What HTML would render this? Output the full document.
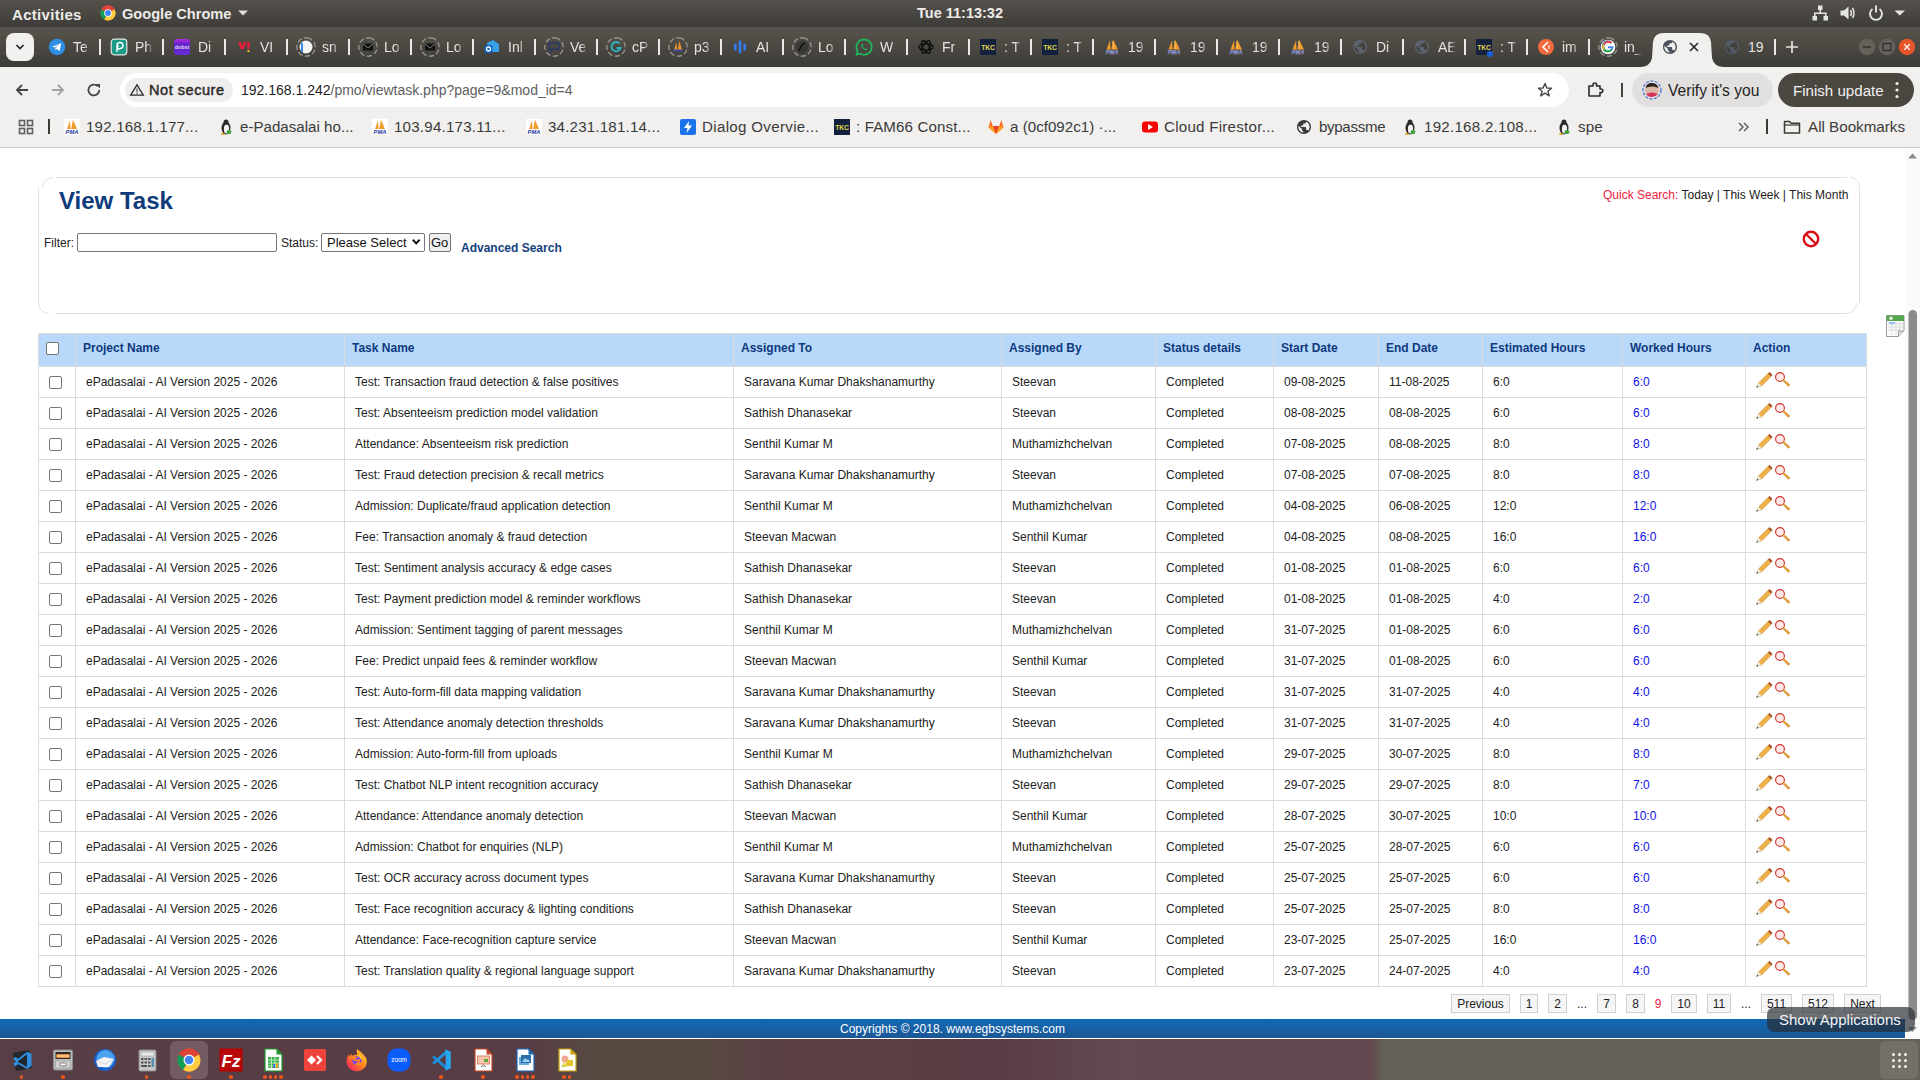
<!DOCTYPE html><html><head><meta charset="utf-8"><style>
*{margin:0;padding:0;box-sizing:border-box}
html,body{width:1920px;height:1080px;overflow:hidden;background:#fff;font-family:"Liberation Sans",sans-serif}
.a{position:absolute}
.t{position:absolute;white-space:nowrap;line-height:14px}
#top{left:0;top:0;width:1920px;height:27px;background:linear-gradient(#55524c,#3e3c38)}
#tabs{left:0;top:27px;width:1920px;height:40px;background:linear-gradient(#58554e,#3d3b36)}
#tool{left:0;top:67px;width:1920px;height:40px;background:#f1f0ee}
#bm{left:0;top:107px;width:1920px;height:41px;background:#f1f0ee;border-bottom:1px solid #c8c6c2}
#page{left:0;top:148px;width:1905px;height:890px;background:#fff}
#sb{left:1905px;top:148px;width:15px;height:890px;background:#fafafa}
#foot{left:0;top:1019px;width:1905px;height:19px;background:linear-gradient(#1169b5,#1c5794)}
#wl{left:0;top:1038px;width:1920px;height:1px;background:#fff}
#dock{left:0;top:1039px;width:1920px;height:41px;background:linear-gradient(90deg,#583e45 0px,#573c43 530px,#574a43 590px,#574a42 700px,#5a3f45 770px,#5a3d44 1000px,#644950 1120px,#634850 1370px,#656058 1384px,#656058 1920px)}
</style></head><body>
<div class="a" id="top"></div>
<div class="a" id="tabs"></div>
<div class="a" id="tool"></div>
<div class="a" style="left:0;top:66px;width:1920px;height:1px;background:#383631"></div>
<div class="a" id="bm"></div>
<div class="a" id="page"></div>
<div class="a" id="sb"></div>
<div class="a" id="foot"></div>
<div class="a" id="wl"></div>
<div class="a" id="dock"></div>
<div class="a" style="left:56px;top:177px;width:1791px;height:1px;background:#e0e0e0"></div>
<div class="a" style="left:56px;top:313px;width:1791px;height:1px;background:#e0e0e0"></div>
<div class="a" style="left:38px;top:188px;width:1px;height:115px;background:#e0e0e0"></div>
<div class="a" style="left:1859px;top:188px;width:1px;height:115px;background:#e0e0e0"></div>
<svg class="a" style="left:30px;top:170px" width="1840" height="150" viewBox="30 170 1840 150"><g fill="none" stroke="#e0e0e0" stroke-width="1"><path d="M42.5 187.5 A11 11 0 0 1 53 177.5"/><path d="M1850.5 177.5 A10.5 10.5 0 0 1 1860 187.5"/><path d="M38.5 303 A10.5 10.5 0 0 0 48.5 313.5"/><path d="M1846.5 313.5 A10.5 10.5 0 0 0 1856.5 303"/></g></svg>
<div class="t" style="left:59px;top:187px;font-size:24px;line-height:27px;font-weight:bold;color:#0e3b7c">View Task</div>
<div class="t" style="left:1603px;top:188px;font-size:12px;color:#222"><span style="color:#f0203c">Quick Search: </span>Today | This Week | This Month</div>
<svg class="a" style="left:1802px;top:230px" width="18" height="18" viewBox="0 0 18 18"><circle cx="9" cy="9" r="7.2" fill="none" stroke="#d80f16" stroke-width="2.4"/><line x1="4" y1="4" x2="14" y2="14" stroke="#d80f16" stroke-width="2.4"/></svg>
<div class="t" style="left:44px;top:236px;font-size:12px;color:#222">Filter:</div>
<div class="a" style="left:77px;top:233px;width:200px;height:19px;border:1px solid #767676;border-radius:2px;background:#fff"></div>
<div class="t" style="left:281px;top:236px;font-size:12px;color:#222">Status:</div>
<div class="a" style="left:321px;top:233px;width:104px;height:19px;border:1px solid #767676;border-radius:2px;background:#fff"></div>
<div class="t" style="left:327px;top:235px;font-size:13px;line-height:15px;color:#111">Please Select</div>
<svg class="a" style="left:411px;top:238px" width="10" height="8" viewBox="0 0 10 8"><path d="M1.8 1.8 L5.2 5.4 L8.6 1.8" fill="none" stroke="#111" stroke-width="2"/></svg>
<div class="a" style="left:429px;top:233px;width:22px;height:19px;border:1px solid #767676;border-radius:2px;background:#efefef"></div>
<div class="t" style="left:431px;top:235px;font-size:13px;line-height:15px;color:#111">Go</div>
<div class="t" style="left:461px;top:241px;font-size:12px;font-weight:bold;color:#123f80">Advanced Search</div>
<svg class="a" style="left:1886px;top:315px" width="19" height="22" viewBox="0 0 19 22"><path d="M0.5 0.5 H18 V16 L12.5 21.5 H0.5 Z" fill="#fbfbfb" stroke="#9a9a9a"/><rect x="0.5" y="0.5" width="17.5" height="5.5" fill="#55a84e"/><circle cx="5" cy="3.3" r="1.8" fill="#e6f2e5"/><g stroke="#d6d6d6" stroke-width="0.8"><line x1="2" y1="9" x2="17" y2="9"/><line x1="2" y1="12" x2="17" y2="12"/><line x1="2" y1="15" x2="15" y2="15"/><line x1="6" y1="7" x2="6" y2="20"/><line x1="10" y1="7" x2="10" y2="20"/><line x1="14" y1="7" x2="14" y2="17"/></g><path d="M3 8 H9" stroke="#7fb3e8" stroke-width="1.5"/><path d="M18 16 H12.5 V21.5" fill="#e0e0e0" stroke="#9a9a9a"/></svg>
<div class="a" style="left:38px;top:333px;width:1828px;height:33px;background:#b8d9f9"></div>
<div class="a" style="left:38px;top:333px;width:1829px;height:1px;background:#dcdcdc"></div>
<div class="a" style="left:38px;top:366px;width:1829px;height:1px;background:#dcdcdc"></div>
<div class="a" style="left:38px;top:397px;width:1829px;height:1px;background:#dcdcdc"></div>
<div class="a" style="left:38px;top:428px;width:1829px;height:1px;background:#dcdcdc"></div>
<div class="a" style="left:38px;top:459px;width:1829px;height:1px;background:#dcdcdc"></div>
<div class="a" style="left:38px;top:490px;width:1829px;height:1px;background:#dcdcdc"></div>
<div class="a" style="left:38px;top:521px;width:1829px;height:1px;background:#dcdcdc"></div>
<div class="a" style="left:38px;top:552px;width:1829px;height:1px;background:#dcdcdc"></div>
<div class="a" style="left:38px;top:583px;width:1829px;height:1px;background:#dcdcdc"></div>
<div class="a" style="left:38px;top:614px;width:1829px;height:1px;background:#dcdcdc"></div>
<div class="a" style="left:38px;top:645px;width:1829px;height:1px;background:#dcdcdc"></div>
<div class="a" style="left:38px;top:676px;width:1829px;height:1px;background:#dcdcdc"></div>
<div class="a" style="left:38px;top:707px;width:1829px;height:1px;background:#dcdcdc"></div>
<div class="a" style="left:38px;top:738px;width:1829px;height:1px;background:#dcdcdc"></div>
<div class="a" style="left:38px;top:769px;width:1829px;height:1px;background:#dcdcdc"></div>
<div class="a" style="left:38px;top:800px;width:1829px;height:1px;background:#dcdcdc"></div>
<div class="a" style="left:38px;top:831px;width:1829px;height:1px;background:#dcdcdc"></div>
<div class="a" style="left:38px;top:862px;width:1829px;height:1px;background:#dcdcdc"></div>
<div class="a" style="left:38px;top:893px;width:1829px;height:1px;background:#dcdcdc"></div>
<div class="a" style="left:38px;top:924px;width:1829px;height:1px;background:#dcdcdc"></div>
<div class="a" style="left:38px;top:955px;width:1829px;height:1px;background:#dcdcdc"></div>
<div class="a" style="left:38px;top:986px;width:1829px;height:1px;background:#dcdcdc"></div>
<div class="a" style="left:38px;top:333px;width:1px;height:654px;background:#dcdcdc"></div>
<div class="a" style="left:75px;top:333px;width:1px;height:654px;background:#dcdcdc"></div>
<div class="a" style="left:344px;top:333px;width:1px;height:654px;background:#dcdcdc"></div>
<div class="a" style="left:733px;top:333px;width:1px;height:654px;background:#dcdcdc"></div>
<div class="a" style="left:1001px;top:333px;width:1px;height:654px;background:#dcdcdc"></div>
<div class="a" style="left:1155px;top:333px;width:1px;height:654px;background:#dcdcdc"></div>
<div class="a" style="left:1273px;top:333px;width:1px;height:654px;background:#dcdcdc"></div>
<div class="a" style="left:1378px;top:333px;width:1px;height:654px;background:#dcdcdc"></div>
<div class="a" style="left:1482px;top:333px;width:1px;height:654px;background:#dcdcdc"></div>
<div class="a" style="left:1622px;top:333px;width:1px;height:654px;background:#dcdcdc"></div>
<div class="a" style="left:1745px;top:333px;width:1px;height:654px;background:#dcdcdc"></div>
<div class="a" style="left:1866px;top:333px;width:1px;height:654px;background:#dcdcdc"></div>
<div class="t" style="left:83px;top:341px;font-size:12px;font-weight:bold;color:#0f3a80">Project Name</div>
<div class="t" style="left:352px;top:341px;font-size:12px;font-weight:bold;color:#0f3a80">Task Name</div>
<div class="t" style="left:741px;top:341px;font-size:12px;font-weight:bold;color:#0f3a80">Assigned To</div>
<div class="t" style="left:1009px;top:341px;font-size:12px;font-weight:bold;color:#0f3a80">Assigned By</div>
<div class="t" style="left:1163px;top:341px;font-size:12px;font-weight:bold;color:#0f3a80">Status details</div>
<div class="t" style="left:1281px;top:341px;font-size:12px;font-weight:bold;color:#0f3a80">Start Date</div>
<div class="t" style="left:1386px;top:341px;font-size:12px;font-weight:bold;color:#0f3a80">End Date</div>
<div class="t" style="left:1490px;top:341px;font-size:12px;font-weight:bold;color:#0f3a80">Estimated Hours</div>
<div class="t" style="left:1630px;top:341px;font-size:12px;font-weight:bold;color:#0f3a80">Worked Hours</div>
<div class="t" style="left:1753px;top:341px;font-size:12px;font-weight:bold;color:#0f3a80">Action</div>
<div class="a" style="left:46px;top:342px;width:13px;height:13px;border:1px solid #767676;border-radius:2px;background:#fff"></div>
<div class="a" style="left:49px;top:376px;width:13px;height:13px;border:1px solid #767676;border-radius:2px;background:#fff"></div>
<div class="t" style="left:86px;top:375px;font-size:12px;color:#222">ePadasalai - AI Version 2025 - 2026</div>
<div class="t" style="left:355px;top:375px;font-size:12px;color:#222">Test: Transaction fraud detection &amp; false positives</div>
<div class="t" style="left:744px;top:375px;font-size:12px;color:#222">Saravana Kumar Dhakshanamurthy</div>
<div class="t" style="left:1012px;top:375px;font-size:12px;color:#222">Steevan</div>
<div class="t" style="left:1166px;top:375px;font-size:12px;color:#222">Completed</div>
<div class="t" style="left:1284px;top:375px;font-size:12px;color:#222">09-08-2025</div>
<div class="t" style="left:1389px;top:375px;font-size:12px;color:#222">11-08-2025</div>
<div class="t" style="left:1493px;top:375px;font-size:12px;color:#222">6:0</div>
<div class="t" style="left:1633px;top:375px;font-size:12px;color:#1010e8">6:0</div>
<svg class="a" style="left:1755px;top:371px" width="36" height="18" viewBox="0 0 36 18"><path d="M2 16 L3.5 12 L13 2.5 L16 5.5 L6.5 15 Z" fill="#f0b048" stroke="#c98a2a" stroke-width="0.6"/><path d="M13 2.5 L14.5 1 L17.5 4 L16 5.5 Z" fill="#a84a1a"/><path d="M2 16 L3.5 12 L6.5 15 Z" fill="#e8ecf4"/><path d="M1 17 L2.2 14.8 L3.2 15.8 Z" fill="#333"/><circle cx="25" cy="6" r="4.4" fill="#fde8e8" stroke="#d0302a" stroke-width="1.1"/><path d="M27.6 9.6 L28.8 8.6 L34.6 13.4 Q35 15.2 33.2 15.2 Z" fill="#e8a038" stroke="#c98222" stroke-width="0.5"/></svg>
<div class="a" style="left:49px;top:407px;width:13px;height:13px;border:1px solid #767676;border-radius:2px;background:#fff"></div>
<div class="t" style="left:86px;top:406px;font-size:12px;color:#222">ePadasalai - AI Version 2025 - 2026</div>
<div class="t" style="left:355px;top:406px;font-size:12px;color:#222">Test: Absenteeism prediction model validation</div>
<div class="t" style="left:744px;top:406px;font-size:12px;color:#222">Sathish Dhanasekar</div>
<div class="t" style="left:1012px;top:406px;font-size:12px;color:#222">Steevan</div>
<div class="t" style="left:1166px;top:406px;font-size:12px;color:#222">Completed</div>
<div class="t" style="left:1284px;top:406px;font-size:12px;color:#222">08-08-2025</div>
<div class="t" style="left:1389px;top:406px;font-size:12px;color:#222">08-08-2025</div>
<div class="t" style="left:1493px;top:406px;font-size:12px;color:#222">6:0</div>
<div class="t" style="left:1633px;top:406px;font-size:12px;color:#1010e8">6:0</div>
<svg class="a" style="left:1755px;top:402px" width="36" height="18" viewBox="0 0 36 18"><path d="M2 16 L3.5 12 L13 2.5 L16 5.5 L6.5 15 Z" fill="#f0b048" stroke="#c98a2a" stroke-width="0.6"/><path d="M13 2.5 L14.5 1 L17.5 4 L16 5.5 Z" fill="#a84a1a"/><path d="M2 16 L3.5 12 L6.5 15 Z" fill="#e8ecf4"/><path d="M1 17 L2.2 14.8 L3.2 15.8 Z" fill="#333"/><circle cx="25" cy="6" r="4.4" fill="#fde8e8" stroke="#d0302a" stroke-width="1.1"/><path d="M27.6 9.6 L28.8 8.6 L34.6 13.4 Q35 15.2 33.2 15.2 Z" fill="#e8a038" stroke="#c98222" stroke-width="0.5"/></svg>
<div class="a" style="left:49px;top:438px;width:13px;height:13px;border:1px solid #767676;border-radius:2px;background:#fff"></div>
<div class="t" style="left:86px;top:437px;font-size:12px;color:#222">ePadasalai - AI Version 2025 - 2026</div>
<div class="t" style="left:355px;top:437px;font-size:12px;color:#222">Attendance: Absenteeism risk prediction</div>
<div class="t" style="left:744px;top:437px;font-size:12px;color:#222">Senthil Kumar M</div>
<div class="t" style="left:1012px;top:437px;font-size:12px;color:#222">Muthamizhchelvan</div>
<div class="t" style="left:1166px;top:437px;font-size:12px;color:#222">Completed</div>
<div class="t" style="left:1284px;top:437px;font-size:12px;color:#222">07-08-2025</div>
<div class="t" style="left:1389px;top:437px;font-size:12px;color:#222">08-08-2025</div>
<div class="t" style="left:1493px;top:437px;font-size:12px;color:#222">8:0</div>
<div class="t" style="left:1633px;top:437px;font-size:12px;color:#1010e8">8:0</div>
<svg class="a" style="left:1755px;top:433px" width="36" height="18" viewBox="0 0 36 18"><path d="M2 16 L3.5 12 L13 2.5 L16 5.5 L6.5 15 Z" fill="#f0b048" stroke="#c98a2a" stroke-width="0.6"/><path d="M13 2.5 L14.5 1 L17.5 4 L16 5.5 Z" fill="#a84a1a"/><path d="M2 16 L3.5 12 L6.5 15 Z" fill="#e8ecf4"/><path d="M1 17 L2.2 14.8 L3.2 15.8 Z" fill="#333"/><circle cx="25" cy="6" r="4.4" fill="#fde8e8" stroke="#d0302a" stroke-width="1.1"/><path d="M27.6 9.6 L28.8 8.6 L34.6 13.4 Q35 15.2 33.2 15.2 Z" fill="#e8a038" stroke="#c98222" stroke-width="0.5"/></svg>
<div class="a" style="left:49px;top:469px;width:13px;height:13px;border:1px solid #767676;border-radius:2px;background:#fff"></div>
<div class="t" style="left:86px;top:468px;font-size:12px;color:#222">ePadasalai - AI Version 2025 - 2026</div>
<div class="t" style="left:355px;top:468px;font-size:12px;color:#222">Test: Fraud detection precision &amp; recall metrics</div>
<div class="t" style="left:744px;top:468px;font-size:12px;color:#222">Saravana Kumar Dhakshanamurthy</div>
<div class="t" style="left:1012px;top:468px;font-size:12px;color:#222">Steevan</div>
<div class="t" style="left:1166px;top:468px;font-size:12px;color:#222">Completed</div>
<div class="t" style="left:1284px;top:468px;font-size:12px;color:#222">07-08-2025</div>
<div class="t" style="left:1389px;top:468px;font-size:12px;color:#222">07-08-2025</div>
<div class="t" style="left:1493px;top:468px;font-size:12px;color:#222">8:0</div>
<div class="t" style="left:1633px;top:468px;font-size:12px;color:#1010e8">8:0</div>
<svg class="a" style="left:1755px;top:464px" width="36" height="18" viewBox="0 0 36 18"><path d="M2 16 L3.5 12 L13 2.5 L16 5.5 L6.5 15 Z" fill="#f0b048" stroke="#c98a2a" stroke-width="0.6"/><path d="M13 2.5 L14.5 1 L17.5 4 L16 5.5 Z" fill="#a84a1a"/><path d="M2 16 L3.5 12 L6.5 15 Z" fill="#e8ecf4"/><path d="M1 17 L2.2 14.8 L3.2 15.8 Z" fill="#333"/><circle cx="25" cy="6" r="4.4" fill="#fde8e8" stroke="#d0302a" stroke-width="1.1"/><path d="M27.6 9.6 L28.8 8.6 L34.6 13.4 Q35 15.2 33.2 15.2 Z" fill="#e8a038" stroke="#c98222" stroke-width="0.5"/></svg>
<div class="a" style="left:49px;top:500px;width:13px;height:13px;border:1px solid #767676;border-radius:2px;background:#fff"></div>
<div class="t" style="left:86px;top:499px;font-size:12px;color:#222">ePadasalai - AI Version 2025 - 2026</div>
<div class="t" style="left:355px;top:499px;font-size:12px;color:#222">Admission: Duplicate/fraud application detection</div>
<div class="t" style="left:744px;top:499px;font-size:12px;color:#222">Senthil Kumar M</div>
<div class="t" style="left:1012px;top:499px;font-size:12px;color:#222">Muthamizhchelvan</div>
<div class="t" style="left:1166px;top:499px;font-size:12px;color:#222">Completed</div>
<div class="t" style="left:1284px;top:499px;font-size:12px;color:#222">04-08-2025</div>
<div class="t" style="left:1389px;top:499px;font-size:12px;color:#222">06-08-2025</div>
<div class="t" style="left:1493px;top:499px;font-size:12px;color:#222">12:0</div>
<div class="t" style="left:1633px;top:499px;font-size:12px;color:#1010e8">12:0</div>
<svg class="a" style="left:1755px;top:495px" width="36" height="18" viewBox="0 0 36 18"><path d="M2 16 L3.5 12 L13 2.5 L16 5.5 L6.5 15 Z" fill="#f0b048" stroke="#c98a2a" stroke-width="0.6"/><path d="M13 2.5 L14.5 1 L17.5 4 L16 5.5 Z" fill="#a84a1a"/><path d="M2 16 L3.5 12 L6.5 15 Z" fill="#e8ecf4"/><path d="M1 17 L2.2 14.8 L3.2 15.8 Z" fill="#333"/><circle cx="25" cy="6" r="4.4" fill="#fde8e8" stroke="#d0302a" stroke-width="1.1"/><path d="M27.6 9.6 L28.8 8.6 L34.6 13.4 Q35 15.2 33.2 15.2 Z" fill="#e8a038" stroke="#c98222" stroke-width="0.5"/></svg>
<div class="a" style="left:49px;top:531px;width:13px;height:13px;border:1px solid #767676;border-radius:2px;background:#fff"></div>
<div class="t" style="left:86px;top:530px;font-size:12px;color:#222">ePadasalai - AI Version 2025 - 2026</div>
<div class="t" style="left:355px;top:530px;font-size:12px;color:#222">Fee: Transaction anomaly &amp; fraud detection</div>
<div class="t" style="left:744px;top:530px;font-size:12px;color:#222">Steevan Macwan</div>
<div class="t" style="left:1012px;top:530px;font-size:12px;color:#222">Senthil Kumar</div>
<div class="t" style="left:1166px;top:530px;font-size:12px;color:#222">Completed</div>
<div class="t" style="left:1284px;top:530px;font-size:12px;color:#222">04-08-2025</div>
<div class="t" style="left:1389px;top:530px;font-size:12px;color:#222">08-08-2025</div>
<div class="t" style="left:1493px;top:530px;font-size:12px;color:#222">16:0</div>
<div class="t" style="left:1633px;top:530px;font-size:12px;color:#1010e8">16:0</div>
<svg class="a" style="left:1755px;top:526px" width="36" height="18" viewBox="0 0 36 18"><path d="M2 16 L3.5 12 L13 2.5 L16 5.5 L6.5 15 Z" fill="#f0b048" stroke="#c98a2a" stroke-width="0.6"/><path d="M13 2.5 L14.5 1 L17.5 4 L16 5.5 Z" fill="#a84a1a"/><path d="M2 16 L3.5 12 L6.5 15 Z" fill="#e8ecf4"/><path d="M1 17 L2.2 14.8 L3.2 15.8 Z" fill="#333"/><circle cx="25" cy="6" r="4.4" fill="#fde8e8" stroke="#d0302a" stroke-width="1.1"/><path d="M27.6 9.6 L28.8 8.6 L34.6 13.4 Q35 15.2 33.2 15.2 Z" fill="#e8a038" stroke="#c98222" stroke-width="0.5"/></svg>
<div class="a" style="left:49px;top:562px;width:13px;height:13px;border:1px solid #767676;border-radius:2px;background:#fff"></div>
<div class="t" style="left:86px;top:561px;font-size:12px;color:#222">ePadasalai - AI Version 2025 - 2026</div>
<div class="t" style="left:355px;top:561px;font-size:12px;color:#222">Test: Sentiment analysis accuracy &amp; edge cases</div>
<div class="t" style="left:744px;top:561px;font-size:12px;color:#222">Sathish Dhanasekar</div>
<div class="t" style="left:1012px;top:561px;font-size:12px;color:#222">Steevan</div>
<div class="t" style="left:1166px;top:561px;font-size:12px;color:#222">Completed</div>
<div class="t" style="left:1284px;top:561px;font-size:12px;color:#222">01-08-2025</div>
<div class="t" style="left:1389px;top:561px;font-size:12px;color:#222">01-08-2025</div>
<div class="t" style="left:1493px;top:561px;font-size:12px;color:#222">6:0</div>
<div class="t" style="left:1633px;top:561px;font-size:12px;color:#1010e8">6:0</div>
<svg class="a" style="left:1755px;top:557px" width="36" height="18" viewBox="0 0 36 18"><path d="M2 16 L3.5 12 L13 2.5 L16 5.5 L6.5 15 Z" fill="#f0b048" stroke="#c98a2a" stroke-width="0.6"/><path d="M13 2.5 L14.5 1 L17.5 4 L16 5.5 Z" fill="#a84a1a"/><path d="M2 16 L3.5 12 L6.5 15 Z" fill="#e8ecf4"/><path d="M1 17 L2.2 14.8 L3.2 15.8 Z" fill="#333"/><circle cx="25" cy="6" r="4.4" fill="#fde8e8" stroke="#d0302a" stroke-width="1.1"/><path d="M27.6 9.6 L28.8 8.6 L34.6 13.4 Q35 15.2 33.2 15.2 Z" fill="#e8a038" stroke="#c98222" stroke-width="0.5"/></svg>
<div class="a" style="left:49px;top:593px;width:13px;height:13px;border:1px solid #767676;border-radius:2px;background:#fff"></div>
<div class="t" style="left:86px;top:592px;font-size:12px;color:#222">ePadasalai - AI Version 2025 - 2026</div>
<div class="t" style="left:355px;top:592px;font-size:12px;color:#222">Test: Payment prediction model &amp; reminder workflows</div>
<div class="t" style="left:744px;top:592px;font-size:12px;color:#222">Sathish Dhanasekar</div>
<div class="t" style="left:1012px;top:592px;font-size:12px;color:#222">Steevan</div>
<div class="t" style="left:1166px;top:592px;font-size:12px;color:#222">Completed</div>
<div class="t" style="left:1284px;top:592px;font-size:12px;color:#222">01-08-2025</div>
<div class="t" style="left:1389px;top:592px;font-size:12px;color:#222">01-08-2025</div>
<div class="t" style="left:1493px;top:592px;font-size:12px;color:#222">4:0</div>
<div class="t" style="left:1633px;top:592px;font-size:12px;color:#1010e8">2:0</div>
<svg class="a" style="left:1755px;top:588px" width="36" height="18" viewBox="0 0 36 18"><path d="M2 16 L3.5 12 L13 2.5 L16 5.5 L6.5 15 Z" fill="#f0b048" stroke="#c98a2a" stroke-width="0.6"/><path d="M13 2.5 L14.5 1 L17.5 4 L16 5.5 Z" fill="#a84a1a"/><path d="M2 16 L3.5 12 L6.5 15 Z" fill="#e8ecf4"/><path d="M1 17 L2.2 14.8 L3.2 15.8 Z" fill="#333"/><circle cx="25" cy="6" r="4.4" fill="#fde8e8" stroke="#d0302a" stroke-width="1.1"/><path d="M27.6 9.6 L28.8 8.6 L34.6 13.4 Q35 15.2 33.2 15.2 Z" fill="#e8a038" stroke="#c98222" stroke-width="0.5"/></svg>
<div class="a" style="left:49px;top:624px;width:13px;height:13px;border:1px solid #767676;border-radius:2px;background:#fff"></div>
<div class="t" style="left:86px;top:623px;font-size:12px;color:#222">ePadasalai - AI Version 2025 - 2026</div>
<div class="t" style="left:355px;top:623px;font-size:12px;color:#222">Admission: Sentiment tagging of parent messages</div>
<div class="t" style="left:744px;top:623px;font-size:12px;color:#222">Senthil Kumar M</div>
<div class="t" style="left:1012px;top:623px;font-size:12px;color:#222">Muthamizhchelvan</div>
<div class="t" style="left:1166px;top:623px;font-size:12px;color:#222">Completed</div>
<div class="t" style="left:1284px;top:623px;font-size:12px;color:#222">31-07-2025</div>
<div class="t" style="left:1389px;top:623px;font-size:12px;color:#222">01-08-2025</div>
<div class="t" style="left:1493px;top:623px;font-size:12px;color:#222">6:0</div>
<div class="t" style="left:1633px;top:623px;font-size:12px;color:#1010e8">6:0</div>
<svg class="a" style="left:1755px;top:619px" width="36" height="18" viewBox="0 0 36 18"><path d="M2 16 L3.5 12 L13 2.5 L16 5.5 L6.5 15 Z" fill="#f0b048" stroke="#c98a2a" stroke-width="0.6"/><path d="M13 2.5 L14.5 1 L17.5 4 L16 5.5 Z" fill="#a84a1a"/><path d="M2 16 L3.5 12 L6.5 15 Z" fill="#e8ecf4"/><path d="M1 17 L2.2 14.8 L3.2 15.8 Z" fill="#333"/><circle cx="25" cy="6" r="4.4" fill="#fde8e8" stroke="#d0302a" stroke-width="1.1"/><path d="M27.6 9.6 L28.8 8.6 L34.6 13.4 Q35 15.2 33.2 15.2 Z" fill="#e8a038" stroke="#c98222" stroke-width="0.5"/></svg>
<div class="a" style="left:49px;top:655px;width:13px;height:13px;border:1px solid #767676;border-radius:2px;background:#fff"></div>
<div class="t" style="left:86px;top:654px;font-size:12px;color:#222">ePadasalai - AI Version 2025 - 2026</div>
<div class="t" style="left:355px;top:654px;font-size:12px;color:#222">Fee: Predict unpaid fees &amp; reminder workflow</div>
<div class="t" style="left:744px;top:654px;font-size:12px;color:#222">Steevan Macwan</div>
<div class="t" style="left:1012px;top:654px;font-size:12px;color:#222">Senthil Kumar</div>
<div class="t" style="left:1166px;top:654px;font-size:12px;color:#222">Completed</div>
<div class="t" style="left:1284px;top:654px;font-size:12px;color:#222">31-07-2025</div>
<div class="t" style="left:1389px;top:654px;font-size:12px;color:#222">01-08-2025</div>
<div class="t" style="left:1493px;top:654px;font-size:12px;color:#222">6:0</div>
<div class="t" style="left:1633px;top:654px;font-size:12px;color:#1010e8">6:0</div>
<svg class="a" style="left:1755px;top:650px" width="36" height="18" viewBox="0 0 36 18"><path d="M2 16 L3.5 12 L13 2.5 L16 5.5 L6.5 15 Z" fill="#f0b048" stroke="#c98a2a" stroke-width="0.6"/><path d="M13 2.5 L14.5 1 L17.5 4 L16 5.5 Z" fill="#a84a1a"/><path d="M2 16 L3.5 12 L6.5 15 Z" fill="#e8ecf4"/><path d="M1 17 L2.2 14.8 L3.2 15.8 Z" fill="#333"/><circle cx="25" cy="6" r="4.4" fill="#fde8e8" stroke="#d0302a" stroke-width="1.1"/><path d="M27.6 9.6 L28.8 8.6 L34.6 13.4 Q35 15.2 33.2 15.2 Z" fill="#e8a038" stroke="#c98222" stroke-width="0.5"/></svg>
<div class="a" style="left:49px;top:686px;width:13px;height:13px;border:1px solid #767676;border-radius:2px;background:#fff"></div>
<div class="t" style="left:86px;top:685px;font-size:12px;color:#222">ePadasalai - AI Version 2025 - 2026</div>
<div class="t" style="left:355px;top:685px;font-size:12px;color:#222">Test: Auto-form-fill data mapping validation</div>
<div class="t" style="left:744px;top:685px;font-size:12px;color:#222">Saravana Kumar Dhakshanamurthy</div>
<div class="t" style="left:1012px;top:685px;font-size:12px;color:#222">Steevan</div>
<div class="t" style="left:1166px;top:685px;font-size:12px;color:#222">Completed</div>
<div class="t" style="left:1284px;top:685px;font-size:12px;color:#222">31-07-2025</div>
<div class="t" style="left:1389px;top:685px;font-size:12px;color:#222">31-07-2025</div>
<div class="t" style="left:1493px;top:685px;font-size:12px;color:#222">4:0</div>
<div class="t" style="left:1633px;top:685px;font-size:12px;color:#1010e8">4:0</div>
<svg class="a" style="left:1755px;top:681px" width="36" height="18" viewBox="0 0 36 18"><path d="M2 16 L3.5 12 L13 2.5 L16 5.5 L6.5 15 Z" fill="#f0b048" stroke="#c98a2a" stroke-width="0.6"/><path d="M13 2.5 L14.5 1 L17.5 4 L16 5.5 Z" fill="#a84a1a"/><path d="M2 16 L3.5 12 L6.5 15 Z" fill="#e8ecf4"/><path d="M1 17 L2.2 14.8 L3.2 15.8 Z" fill="#333"/><circle cx="25" cy="6" r="4.4" fill="#fde8e8" stroke="#d0302a" stroke-width="1.1"/><path d="M27.6 9.6 L28.8 8.6 L34.6 13.4 Q35 15.2 33.2 15.2 Z" fill="#e8a038" stroke="#c98222" stroke-width="0.5"/></svg>
<div class="a" style="left:49px;top:717px;width:13px;height:13px;border:1px solid #767676;border-radius:2px;background:#fff"></div>
<div class="t" style="left:86px;top:716px;font-size:12px;color:#222">ePadasalai - AI Version 2025 - 2026</div>
<div class="t" style="left:355px;top:716px;font-size:12px;color:#222">Test: Attendance anomaly detection thresholds</div>
<div class="t" style="left:744px;top:716px;font-size:12px;color:#222">Saravana Kumar Dhakshanamurthy</div>
<div class="t" style="left:1012px;top:716px;font-size:12px;color:#222">Steevan</div>
<div class="t" style="left:1166px;top:716px;font-size:12px;color:#222">Completed</div>
<div class="t" style="left:1284px;top:716px;font-size:12px;color:#222">31-07-2025</div>
<div class="t" style="left:1389px;top:716px;font-size:12px;color:#222">31-07-2025</div>
<div class="t" style="left:1493px;top:716px;font-size:12px;color:#222">4:0</div>
<div class="t" style="left:1633px;top:716px;font-size:12px;color:#1010e8">4:0</div>
<svg class="a" style="left:1755px;top:712px" width="36" height="18" viewBox="0 0 36 18"><path d="M2 16 L3.5 12 L13 2.5 L16 5.5 L6.5 15 Z" fill="#f0b048" stroke="#c98a2a" stroke-width="0.6"/><path d="M13 2.5 L14.5 1 L17.5 4 L16 5.5 Z" fill="#a84a1a"/><path d="M2 16 L3.5 12 L6.5 15 Z" fill="#e8ecf4"/><path d="M1 17 L2.2 14.8 L3.2 15.8 Z" fill="#333"/><circle cx="25" cy="6" r="4.4" fill="#fde8e8" stroke="#d0302a" stroke-width="1.1"/><path d="M27.6 9.6 L28.8 8.6 L34.6 13.4 Q35 15.2 33.2 15.2 Z" fill="#e8a038" stroke="#c98222" stroke-width="0.5"/></svg>
<div class="a" style="left:49px;top:748px;width:13px;height:13px;border:1px solid #767676;border-radius:2px;background:#fff"></div>
<div class="t" style="left:86px;top:747px;font-size:12px;color:#222">ePadasalai - AI Version 2025 - 2026</div>
<div class="t" style="left:355px;top:747px;font-size:12px;color:#222">Admission: Auto-form-fill from uploads</div>
<div class="t" style="left:744px;top:747px;font-size:12px;color:#222">Senthil Kumar M</div>
<div class="t" style="left:1012px;top:747px;font-size:12px;color:#222">Muthamizhchelvan</div>
<div class="t" style="left:1166px;top:747px;font-size:12px;color:#222">Completed</div>
<div class="t" style="left:1284px;top:747px;font-size:12px;color:#222">29-07-2025</div>
<div class="t" style="left:1389px;top:747px;font-size:12px;color:#222">30-07-2025</div>
<div class="t" style="left:1493px;top:747px;font-size:12px;color:#222">8:0</div>
<div class="t" style="left:1633px;top:747px;font-size:12px;color:#1010e8">8:0</div>
<svg class="a" style="left:1755px;top:743px" width="36" height="18" viewBox="0 0 36 18"><path d="M2 16 L3.5 12 L13 2.5 L16 5.5 L6.5 15 Z" fill="#f0b048" stroke="#c98a2a" stroke-width="0.6"/><path d="M13 2.5 L14.5 1 L17.5 4 L16 5.5 Z" fill="#a84a1a"/><path d="M2 16 L3.5 12 L6.5 15 Z" fill="#e8ecf4"/><path d="M1 17 L2.2 14.8 L3.2 15.8 Z" fill="#333"/><circle cx="25" cy="6" r="4.4" fill="#fde8e8" stroke="#d0302a" stroke-width="1.1"/><path d="M27.6 9.6 L28.8 8.6 L34.6 13.4 Q35 15.2 33.2 15.2 Z" fill="#e8a038" stroke="#c98222" stroke-width="0.5"/></svg>
<div class="a" style="left:49px;top:779px;width:13px;height:13px;border:1px solid #767676;border-radius:2px;background:#fff"></div>
<div class="t" style="left:86px;top:778px;font-size:12px;color:#222">ePadasalai - AI Version 2025 - 2026</div>
<div class="t" style="left:355px;top:778px;font-size:12px;color:#222">Test: Chatbot NLP intent recognition accuracy</div>
<div class="t" style="left:744px;top:778px;font-size:12px;color:#222">Sathish Dhanasekar</div>
<div class="t" style="left:1012px;top:778px;font-size:12px;color:#222">Steevan</div>
<div class="t" style="left:1166px;top:778px;font-size:12px;color:#222">Completed</div>
<div class="t" style="left:1284px;top:778px;font-size:12px;color:#222">29-07-2025</div>
<div class="t" style="left:1389px;top:778px;font-size:12px;color:#222">29-07-2025</div>
<div class="t" style="left:1493px;top:778px;font-size:12px;color:#222">8:0</div>
<div class="t" style="left:1633px;top:778px;font-size:12px;color:#1010e8">7:0</div>
<svg class="a" style="left:1755px;top:774px" width="36" height="18" viewBox="0 0 36 18"><path d="M2 16 L3.5 12 L13 2.5 L16 5.5 L6.5 15 Z" fill="#f0b048" stroke="#c98a2a" stroke-width="0.6"/><path d="M13 2.5 L14.5 1 L17.5 4 L16 5.5 Z" fill="#a84a1a"/><path d="M2 16 L3.5 12 L6.5 15 Z" fill="#e8ecf4"/><path d="M1 17 L2.2 14.8 L3.2 15.8 Z" fill="#333"/><circle cx="25" cy="6" r="4.4" fill="#fde8e8" stroke="#d0302a" stroke-width="1.1"/><path d="M27.6 9.6 L28.8 8.6 L34.6 13.4 Q35 15.2 33.2 15.2 Z" fill="#e8a038" stroke="#c98222" stroke-width="0.5"/></svg>
<div class="a" style="left:49px;top:810px;width:13px;height:13px;border:1px solid #767676;border-radius:2px;background:#fff"></div>
<div class="t" style="left:86px;top:809px;font-size:12px;color:#222">ePadasalai - AI Version 2025 - 2026</div>
<div class="t" style="left:355px;top:809px;font-size:12px;color:#222">Attendance: Attendance anomaly detection</div>
<div class="t" style="left:744px;top:809px;font-size:12px;color:#222">Steevan Macwan</div>
<div class="t" style="left:1012px;top:809px;font-size:12px;color:#222">Senthil Kumar</div>
<div class="t" style="left:1166px;top:809px;font-size:12px;color:#222">Completed</div>
<div class="t" style="left:1284px;top:809px;font-size:12px;color:#222">28-07-2025</div>
<div class="t" style="left:1389px;top:809px;font-size:12px;color:#222">30-07-2025</div>
<div class="t" style="left:1493px;top:809px;font-size:12px;color:#222">10:0</div>
<div class="t" style="left:1633px;top:809px;font-size:12px;color:#1010e8">10:0</div>
<svg class="a" style="left:1755px;top:805px" width="36" height="18" viewBox="0 0 36 18"><path d="M2 16 L3.5 12 L13 2.5 L16 5.5 L6.5 15 Z" fill="#f0b048" stroke="#c98a2a" stroke-width="0.6"/><path d="M13 2.5 L14.5 1 L17.5 4 L16 5.5 Z" fill="#a84a1a"/><path d="M2 16 L3.5 12 L6.5 15 Z" fill="#e8ecf4"/><path d="M1 17 L2.2 14.8 L3.2 15.8 Z" fill="#333"/><circle cx="25" cy="6" r="4.4" fill="#fde8e8" stroke="#d0302a" stroke-width="1.1"/><path d="M27.6 9.6 L28.8 8.6 L34.6 13.4 Q35 15.2 33.2 15.2 Z" fill="#e8a038" stroke="#c98222" stroke-width="0.5"/></svg>
<div class="a" style="left:49px;top:841px;width:13px;height:13px;border:1px solid #767676;border-radius:2px;background:#fff"></div>
<div class="t" style="left:86px;top:840px;font-size:12px;color:#222">ePadasalai - AI Version 2025 - 2026</div>
<div class="t" style="left:355px;top:840px;font-size:12px;color:#222">Admission: Chatbot for enquiries (NLP)</div>
<div class="t" style="left:744px;top:840px;font-size:12px;color:#222">Senthil Kumar M</div>
<div class="t" style="left:1012px;top:840px;font-size:12px;color:#222">Muthamizhchelvan</div>
<div class="t" style="left:1166px;top:840px;font-size:12px;color:#222">Completed</div>
<div class="t" style="left:1284px;top:840px;font-size:12px;color:#222">25-07-2025</div>
<div class="t" style="left:1389px;top:840px;font-size:12px;color:#222">28-07-2025</div>
<div class="t" style="left:1493px;top:840px;font-size:12px;color:#222">6:0</div>
<div class="t" style="left:1633px;top:840px;font-size:12px;color:#1010e8">6:0</div>
<svg class="a" style="left:1755px;top:836px" width="36" height="18" viewBox="0 0 36 18"><path d="M2 16 L3.5 12 L13 2.5 L16 5.5 L6.5 15 Z" fill="#f0b048" stroke="#c98a2a" stroke-width="0.6"/><path d="M13 2.5 L14.5 1 L17.5 4 L16 5.5 Z" fill="#a84a1a"/><path d="M2 16 L3.5 12 L6.5 15 Z" fill="#e8ecf4"/><path d="M1 17 L2.2 14.8 L3.2 15.8 Z" fill="#333"/><circle cx="25" cy="6" r="4.4" fill="#fde8e8" stroke="#d0302a" stroke-width="1.1"/><path d="M27.6 9.6 L28.8 8.6 L34.6 13.4 Q35 15.2 33.2 15.2 Z" fill="#e8a038" stroke="#c98222" stroke-width="0.5"/></svg>
<div class="a" style="left:49px;top:872px;width:13px;height:13px;border:1px solid #767676;border-radius:2px;background:#fff"></div>
<div class="t" style="left:86px;top:871px;font-size:12px;color:#222">ePadasalai - AI Version 2025 - 2026</div>
<div class="t" style="left:355px;top:871px;font-size:12px;color:#222">Test: OCR accuracy across document types</div>
<div class="t" style="left:744px;top:871px;font-size:12px;color:#222">Saravana Kumar Dhakshanamurthy</div>
<div class="t" style="left:1012px;top:871px;font-size:12px;color:#222">Steevan</div>
<div class="t" style="left:1166px;top:871px;font-size:12px;color:#222">Completed</div>
<div class="t" style="left:1284px;top:871px;font-size:12px;color:#222">25-07-2025</div>
<div class="t" style="left:1389px;top:871px;font-size:12px;color:#222">25-07-2025</div>
<div class="t" style="left:1493px;top:871px;font-size:12px;color:#222">6:0</div>
<div class="t" style="left:1633px;top:871px;font-size:12px;color:#1010e8">6:0</div>
<svg class="a" style="left:1755px;top:867px" width="36" height="18" viewBox="0 0 36 18"><path d="M2 16 L3.5 12 L13 2.5 L16 5.5 L6.5 15 Z" fill="#f0b048" stroke="#c98a2a" stroke-width="0.6"/><path d="M13 2.5 L14.5 1 L17.5 4 L16 5.5 Z" fill="#a84a1a"/><path d="M2 16 L3.5 12 L6.5 15 Z" fill="#e8ecf4"/><path d="M1 17 L2.2 14.8 L3.2 15.8 Z" fill="#333"/><circle cx="25" cy="6" r="4.4" fill="#fde8e8" stroke="#d0302a" stroke-width="1.1"/><path d="M27.6 9.6 L28.8 8.6 L34.6 13.4 Q35 15.2 33.2 15.2 Z" fill="#e8a038" stroke="#c98222" stroke-width="0.5"/></svg>
<div class="a" style="left:49px;top:903px;width:13px;height:13px;border:1px solid #767676;border-radius:2px;background:#fff"></div>
<div class="t" style="left:86px;top:902px;font-size:12px;color:#222">ePadasalai - AI Version 2025 - 2026</div>
<div class="t" style="left:355px;top:902px;font-size:12px;color:#222">Test: Face recognition accuracy &amp; lighting conditions</div>
<div class="t" style="left:744px;top:902px;font-size:12px;color:#222">Sathish Dhanasekar</div>
<div class="t" style="left:1012px;top:902px;font-size:12px;color:#222">Steevan</div>
<div class="t" style="left:1166px;top:902px;font-size:12px;color:#222">Completed</div>
<div class="t" style="left:1284px;top:902px;font-size:12px;color:#222">25-07-2025</div>
<div class="t" style="left:1389px;top:902px;font-size:12px;color:#222">25-07-2025</div>
<div class="t" style="left:1493px;top:902px;font-size:12px;color:#222">8:0</div>
<div class="t" style="left:1633px;top:902px;font-size:12px;color:#1010e8">8:0</div>
<svg class="a" style="left:1755px;top:898px" width="36" height="18" viewBox="0 0 36 18"><path d="M2 16 L3.5 12 L13 2.5 L16 5.5 L6.5 15 Z" fill="#f0b048" stroke="#c98a2a" stroke-width="0.6"/><path d="M13 2.5 L14.5 1 L17.5 4 L16 5.5 Z" fill="#a84a1a"/><path d="M2 16 L3.5 12 L6.5 15 Z" fill="#e8ecf4"/><path d="M1 17 L2.2 14.8 L3.2 15.8 Z" fill="#333"/><circle cx="25" cy="6" r="4.4" fill="#fde8e8" stroke="#d0302a" stroke-width="1.1"/><path d="M27.6 9.6 L28.8 8.6 L34.6 13.4 Q35 15.2 33.2 15.2 Z" fill="#e8a038" stroke="#c98222" stroke-width="0.5"/></svg>
<div class="a" style="left:49px;top:934px;width:13px;height:13px;border:1px solid #767676;border-radius:2px;background:#fff"></div>
<div class="t" style="left:86px;top:933px;font-size:12px;color:#222">ePadasalai - AI Version 2025 - 2026</div>
<div class="t" style="left:355px;top:933px;font-size:12px;color:#222">Attendance: Face-recognition capture service</div>
<div class="t" style="left:744px;top:933px;font-size:12px;color:#222">Steevan Macwan</div>
<div class="t" style="left:1012px;top:933px;font-size:12px;color:#222">Senthil Kumar</div>
<div class="t" style="left:1166px;top:933px;font-size:12px;color:#222">Completed</div>
<div class="t" style="left:1284px;top:933px;font-size:12px;color:#222">23-07-2025</div>
<div class="t" style="left:1389px;top:933px;font-size:12px;color:#222">25-07-2025</div>
<div class="t" style="left:1493px;top:933px;font-size:12px;color:#222">16:0</div>
<div class="t" style="left:1633px;top:933px;font-size:12px;color:#1010e8">16:0</div>
<svg class="a" style="left:1755px;top:929px" width="36" height="18" viewBox="0 0 36 18"><path d="M2 16 L3.5 12 L13 2.5 L16 5.5 L6.5 15 Z" fill="#f0b048" stroke="#c98a2a" stroke-width="0.6"/><path d="M13 2.5 L14.5 1 L17.5 4 L16 5.5 Z" fill="#a84a1a"/><path d="M2 16 L3.5 12 L6.5 15 Z" fill="#e8ecf4"/><path d="M1 17 L2.2 14.8 L3.2 15.8 Z" fill="#333"/><circle cx="25" cy="6" r="4.4" fill="#fde8e8" stroke="#d0302a" stroke-width="1.1"/><path d="M27.6 9.6 L28.8 8.6 L34.6 13.4 Q35 15.2 33.2 15.2 Z" fill="#e8a038" stroke="#c98222" stroke-width="0.5"/></svg>
<div class="a" style="left:49px;top:965px;width:13px;height:13px;border:1px solid #767676;border-radius:2px;background:#fff"></div>
<div class="t" style="left:86px;top:964px;font-size:12px;color:#222">ePadasalai - AI Version 2025 - 2026</div>
<div class="t" style="left:355px;top:964px;font-size:12px;color:#222">Test: Translation quality &amp; regional language support</div>
<div class="t" style="left:744px;top:964px;font-size:12px;color:#222">Saravana Kumar Dhakshanamurthy</div>
<div class="t" style="left:1012px;top:964px;font-size:12px;color:#222">Steevan</div>
<div class="t" style="left:1166px;top:964px;font-size:12px;color:#222">Completed</div>
<div class="t" style="left:1284px;top:964px;font-size:12px;color:#222">23-07-2025</div>
<div class="t" style="left:1389px;top:964px;font-size:12px;color:#222">24-07-2025</div>
<div class="t" style="left:1493px;top:964px;font-size:12px;color:#222">4:0</div>
<div class="t" style="left:1633px;top:964px;font-size:12px;color:#1010e8">4:0</div>
<svg class="a" style="left:1755px;top:960px" width="36" height="18" viewBox="0 0 36 18"><path d="M2 16 L3.5 12 L13 2.5 L16 5.5 L6.5 15 Z" fill="#f0b048" stroke="#c98a2a" stroke-width="0.6"/><path d="M13 2.5 L14.5 1 L17.5 4 L16 5.5 Z" fill="#a84a1a"/><path d="M2 16 L3.5 12 L6.5 15 Z" fill="#e8ecf4"/><path d="M1 17 L2.2 14.8 L3.2 15.8 Z" fill="#333"/><circle cx="25" cy="6" r="4.4" fill="#fde8e8" stroke="#d0302a" stroke-width="1.1"/><path d="M27.6 9.6 L28.8 8.6 L34.6 13.4 Q35 15.2 33.2 15.2 Z" fill="#e8a038" stroke="#c98222" stroke-width="0.5"/></svg>
<div class="a" style="left:1451px;top:994px;width:59px;height:19px;border:1px solid #d0d0d0;background:#f5f5f5"></div>
<div class="t" style="left:1451px;top:997px;width:59px;text-align:center;font-size:12px;color:#222">Previous</div>
<div class="a" style="left:1520px;top:994px;width:18px;height:19px;border:1px solid #d0d0d0;background:#f5f5f5"></div>
<div class="t" style="left:1520px;top:997px;width:18px;text-align:center;font-size:12px;color:#222">1</div>
<div class="a" style="left:1548px;top:994px;width:19px;height:19px;border:1px solid #d0d0d0;background:#f5f5f5"></div>
<div class="t" style="left:1548px;top:997px;width:19px;text-align:center;font-size:12px;color:#222">2</div>
<div class="t" style="left:1577px;top:997px;width:10px;text-align:center;font-size:12px;color:#222">...</div>
<div class="a" style="left:1597px;top:994px;width:19px;height:19px;border:1px solid #d0d0d0;background:#f5f5f5"></div>
<div class="t" style="left:1597px;top:997px;width:19px;text-align:center;font-size:12px;color:#222">7</div>
<div class="a" style="left:1626px;top:994px;width:19px;height:19px;border:1px solid #d0d0d0;background:#f5f5f5"></div>
<div class="t" style="left:1626px;top:997px;width:19px;text-align:center;font-size:12px;color:#222">8</div>
<div class="t" style="left:1654px;top:997px;width:8px;text-align:center;font-size:12px;color:#f0203c">9</div>
<div class="a" style="left:1671px;top:994px;width:26px;height:19px;border:1px solid #d0d0d0;background:#f5f5f5"></div>
<div class="t" style="left:1671px;top:997px;width:26px;text-align:center;font-size:12px;color:#222">10</div>
<div class="a" style="left:1707px;top:994px;width:24px;height:19px;border:1px solid #d0d0d0;background:#f5f5f5"></div>
<div class="t" style="left:1707px;top:997px;width:24px;text-align:center;font-size:12px;color:#222">11</div>
<div class="t" style="left:1741px;top:997px;width:10px;text-align:center;font-size:12px;color:#222">...</div>
<div class="a" style="left:1761px;top:994px;width:31px;height:19px;border:1px solid #d0d0d0;background:#f5f5f5"></div>
<div class="t" style="left:1761px;top:997px;width:31px;text-align:center;font-size:12px;color:#222">511</div>
<div class="a" style="left:1802px;top:994px;width:32px;height:19px;border:1px solid #d0d0d0;background:#f5f5f5"></div>
<div class="t" style="left:1802px;top:997px;width:32px;text-align:center;font-size:12px;color:#222">512</div>
<div class="a" style="left:1844px;top:994px;width:37px;height:19px;border:1px solid #d0d0d0;background:#f5f5f5"></div>
<div class="t" style="left:1844px;top:997px;width:37px;text-align:center;font-size:12px;color:#222">Next</div>
<div class="t" style="left:840px;top:1022px;font-size:12px;color:#fff">Copyrights © 2018. www.egbsystems.com</div>
<svg class="a" style="left:1905px;top:148px" width="15" height="890" viewBox="0 0 15 890"><path d="M3 10.5 L7.5 5.5 L12 10.5 Z" fill="#8a8a8a"/><rect x="3.5" y="162" width="8.5" height="710" rx="4.2" fill="#8a8a8a"/><path d="M3 879 L7.5 884 L12 879 Z" fill="#8a8a8a"/></svg>
<div class="t" style="left:12px;top:6px;font-size:15px;line-height:17px;font-weight:bold;color:#ecebe8;letter-spacing:0.3px">Activities</div>
<svg class="a" style="left:100px;top:5px" width="16" height="16" viewBox="0 0 16 16"><circle cx="8" cy="8" r="7.6" fill="#db4437"/><path d="M8 8 L1.4 4.2 A7.6 7.6 0 0 0 4.2 14.6 Z" fill="#0f9d58"/><path d="M8 8 L4.2 14.6 A7.6 7.6 0 0 0 15.6 8 L14.6 4.2 Z" fill="#ffcd40"/><path d="M8 8 L1.4 4.2 A7.6 7.6 0 0 1 14.6 4.2 Z" fill="#db4437"/><circle cx="8" cy="8" r="3.8" fill="#fff"/><circle cx="8" cy="8" r="2.9" fill="#4285f4"/></svg>
<div class="t" style="left:122px;top:6px;font-size:14.6px;line-height:17px;font-weight:bold;color:#ecebe8">Google Chrome</div>
<svg class="a" style="left:237px;top:9px" width="12" height="8" viewBox="0 0 12 8"><path d="M1 1.5 H11 L6 6.5 Z" fill="#dddcd8"/></svg>
<div class="t" style="left:917px;top:5px;font-size:14.5px;line-height:17px;font-weight:bold;color:#ecebe8">Tue 11:13:32</div>
<svg class="a" style="left:1811px;top:4px" width="18" height="18" viewBox="0 0 18 18"><g fill="#e6e5e1"><rect x="7" y="1.5" width="4.5" height="4.5"/><rect x="1.5" y="12" width="4.5" height="4.5"/><rect x="12.5" y="12" width="4.5" height="4.5"/><rect x="8.5" y="6" width="1.5" height="3.5"/><rect x="3" y="8.5" width="12.5" height="1.5"/><rect x="3" y="9" width="1.5" height="3"/><rect x="14" y="9" width="1.5" height="3"/></g></svg>
<svg class="a" style="left:1839px;top:4px" width="18" height="18" viewBox="0 0 18 18"><path d="M1.5 6.5 H5 L9.5 2.5 V15.5 L5 11.5 H1.5 Z" fill="#e6e5e1"/><path d="M11.5 6 Q13.5 9 11.5 12 M13.5 4 Q16.5 9 13.5 14" fill="none" stroke="#e6e5e1" stroke-width="1.5"/></svg>
<svg class="a" style="left:1867px;top:4px" width="18" height="18" viewBox="0 0 18 18"><path d="M5.5 5 A6 6 0 1 0 12.5 5" fill="none" stroke="#e6e5e1" stroke-width="1.9"/><rect x="8.1" y="1.5" width="1.9" height="7" fill="#e6e5e1"/></svg>
<svg class="a" style="left:1893px;top:9px" width="14" height="8" viewBox="0 0 14 8"><path d="M1.5 1.5 H12 L6.75 6.5 Z" fill="#e6e5e1"/></svg>
<div class="a" style="left:6px;top:33px;width:28px;height:28px;border-radius:8px;background:#f1f0ee"></div>
<svg class="a" style="left:14px;top:41px" width="12" height="12" viewBox="0 0 12 12"><path d="M2.5 4 L6 7.5 L9.5 4" fill="none" stroke="#1f1f1f" stroke-width="1.6"/></svg>
<svg class="a" style="left:47px;top:37px" width="20" height="20" viewBox="0 0 20 20"><circle cx="10" cy="10" r="8.2" fill="#2f8fe5"/><path d="M5.2 9.8 L14.2 6.2 L12.6 14 L9.6 11.9 L8.4 13.3 L8.3 11 L12.5 7.6 L7.6 10.6 Z" fill="#fff"/></svg>
<div class="t" style="left:73px;top:39px;width:18px;overflow:hidden;font-size:14px;line-height:16px;color:#e6e4df;-webkit-mask-image:linear-gradient(90deg,#000 62%,transparent 100%)">Te</div>
<div class="a" style="left:99px;top:39px;width:2px;height:16px;background:#ebe9e5"></div>
<svg class="a" style="left:109px;top:37px" width="20" height="20" viewBox="0 0 20 20"><rect x="2.2" y="2.2" width="15.6" height="15.6" rx="3" fill="#189a86" stroke="#e6e6e6" stroke-width="1.2"/><path d="M8 15 V8.5 A3 3 0 1 1 11 11.5 A1.5 1.5 0 1 1 9.8 9" fill="none" stroke="#fff" stroke-width="1.4"/></svg>
<div class="t" style="left:135px;top:39px;width:18px;overflow:hidden;font-size:14px;line-height:16px;color:#e6e4df;-webkit-mask-image:linear-gradient(90deg,#000 62%,transparent 100%)">Ph</div>
<div class="a" style="left:162px;top:39px;width:2px;height:16px;background:#ebe9e5"></div>
<svg class="a" style="left:172px;top:37px" width="20" height="20" viewBox="0 0 20 20"><defs><linearGradient id="pg" x1="0" y1="0" x2="0" y2="1"><stop offset="0" stop-color="#b52fe6"/><stop offset=".35" stop-color="#5b1fc4"/><stop offset="1" stop-color="#6a2ed8"/></linearGradient></defs><rect x="2" y="2" width="16" height="16" rx="3" fill="url(#pg)"/><text x="10" y="11.6" font-family="Liberation Sans" font-size="5.4" font-weight="bold" fill="#e4d8f6" text-anchor="middle">dobst</text></svg>
<div class="t" style="left:198px;top:39px;width:18px;overflow:hidden;font-size:14px;line-height:16px;color:#e6e4df;-webkit-mask-image:linear-gradient(90deg,#000 62%,transparent 100%)">Di</div>
<div class="a" style="left:224px;top:39px;width:2px;height:16px;background:#ebe9e5"></div>
<svg class="a" style="left:234px;top:37px" width="20" height="20" viewBox="0 0 20 20"><path d="M4.2 5 H7 L8.2 9.5 L9.4 5 H12.2 L9.8 12 H6.6 Z" fill="#ec1c3a"/><path d="M13 5 H15.8 L15.4 12 H13.4 Z" fill="#ec1c3a"/><circle cx="14.4" cy="14.2" r="1.1" fill="#f6d21a"/></svg>
<div class="t" style="left:260px;top:39px;width:18px;overflow:hidden;font-size:14px;line-height:16px;color:#e6e4df;-webkit-mask-image:linear-gradient(90deg,#000 62%,transparent 100%)">VI</div>
<div class="a" style="left:286px;top:39px;width:2px;height:16px;background:#ebe9e5"></div>
<svg class="a" style="left:296px;top:37px" width="20" height="20" viewBox="0 0 20 20"><circle cx="10" cy="10" r="9.2" fill="none" stroke="#9c9a95" stroke-width="1.3" stroke-dasharray="5.2 2.5" transform="rotate(-80 10 10)"/><circle cx="10" cy="10" r="6.5" fill="#f4f4f4"/><rect x="5" y="6" width="2" height="9" fill="#3a8ee6"/></svg>
<div class="t" style="left:322px;top:39px;width:18px;overflow:hidden;font-size:14px;line-height:16px;color:#e6e4df;-webkit-mask-image:linear-gradient(90deg,#000 62%,transparent 100%)">sn</div>
<div class="a" style="left:348px;top:39px;width:2px;height:16px;background:#ebe9e5"></div>
<svg class="a" style="left:358px;top:37px" width="20" height="20" viewBox="0 0 20 20"><circle cx="10" cy="10" r="9.2" fill="none" stroke="#9c9a95" stroke-width="1.3" stroke-dasharray="5.2 2.5" transform="rotate(-80 10 10)"/><rect x="5" y="6.5" width="10" height="7" fill="#111"/><path d="M5 7 L10 11 L15 7" stroke="#9a9a9a" stroke-width=".8" fill="none"/></svg>
<div class="t" style="left:384px;top:39px;width:18px;overflow:hidden;font-size:14px;line-height:16px;color:#e6e4df;-webkit-mask-image:linear-gradient(90deg,#000 62%,transparent 100%)">Lo</div>
<div class="a" style="left:410px;top:39px;width:2px;height:16px;background:#ebe9e5"></div>
<svg class="a" style="left:420px;top:37px" width="20" height="20" viewBox="0 0 20 20"><circle cx="10" cy="10" r="9.2" fill="none" stroke="#9c9a95" stroke-width="1.3" stroke-dasharray="5.2 2.5" transform="rotate(-80 10 10)"/><rect x="5" y="6.5" width="10" height="7" fill="#111"/><path d="M5 7 L10 11 L15 7" stroke="#9a9a9a" stroke-width=".8" fill="none"/></svg>
<div class="t" style="left:446px;top:39px;width:18px;overflow:hidden;font-size:14px;line-height:16px;color:#e6e4df;-webkit-mask-image:linear-gradient(90deg,#000 62%,transparent 100%)">Lo</div>
<div class="a" style="left:472px;top:39px;width:2px;height:16px;background:#ebe9e5"></div>
<svg class="a" style="left:482px;top:37px" width="20" height="20" viewBox="0 0 20 20"><path d="M5 6 L11 3 L17 7 V15 H7 Z" fill="#37a0e8"/><rect x="2.5" y="8" width="8" height="8" rx="1.5" fill="#0c62c4"/><circle cx="6.5" cy="12" r="2" fill="none" stroke="#fff" stroke-width="1.3"/></svg>
<div class="t" style="left:508px;top:39px;width:18px;overflow:hidden;font-size:14px;line-height:16px;color:#e6e4df;-webkit-mask-image:linear-gradient(90deg,#000 62%,transparent 100%)">Inl</div>
<div class="a" style="left:534px;top:39px;width:2px;height:16px;background:#ebe9e5"></div>
<svg class="a" style="left:544px;top:37px" width="20" height="20" viewBox="0 0 20 20"><circle cx="10" cy="10" r="9.2" fill="none" stroke="#9c9a95" stroke-width="1.3" stroke-dasharray="5.2 2.5" transform="rotate(-80 10 10)"/><path d="M5 6 H15 V12 H9 L6 14.5 V12 H5 Z" fill="none" stroke="#2c3a66" stroke-width="1.4"/></svg>
<div class="t" style="left:570px;top:39px;width:18px;overflow:hidden;font-size:14px;line-height:16px;color:#e6e4df;-webkit-mask-image:linear-gradient(90deg,#000 62%,transparent 100%)">Ve</div>
<div class="a" style="left:596px;top:39px;width:2px;height:16px;background:#ebe9e5"></div>
<svg class="a" style="left:606px;top:37px" width="20" height="20" viewBox="0 0 20 20"><circle cx="10" cy="10" r="9.2" fill="none" stroke="#9c9a95" stroke-width="1.3" stroke-dasharray="5.2 2.5" transform="rotate(-80 10 10)"/><path d="M13.5 6.5 A4.6 4.6 0 1 0 14.5 11 H10.5" fill="none" stroke="#2bb3c0" stroke-width="2"/></svg>
<div class="t" style="left:632px;top:39px;width:18px;overflow:hidden;font-size:14px;line-height:16px;color:#e6e4df;-webkit-mask-image:linear-gradient(90deg,#000 62%,transparent 100%)">cP</div>
<div class="a" style="left:658px;top:39px;width:2px;height:16px;background:#ebe9e5"></div>
<svg class="a" style="left:668px;top:37px" width="20" height="20" viewBox="0 0 20 20"><circle cx="10" cy="10" r="9.2" fill="none" stroke="#9c9a95" stroke-width="1.3" stroke-dasharray="5.2 2.5" transform="rotate(-80 10 10)"/><path d="M6 13 L8.5 5 L9 13 Z M9.5 13 L11.5 4 L14 13 Z" fill="#f0952a"/><rect x="5.5" y="12.5" width="9" height="2" fill="#3a4aa0"/></svg>
<div class="t" style="left:694px;top:39px;width:18px;overflow:hidden;font-size:14px;line-height:16px;color:#e6e4df;-webkit-mask-image:linear-gradient(90deg,#000 62%,transparent 100%)">p3</div>
<div class="a" style="left:720px;top:39px;width:2px;height:16px;background:#ebe9e5"></div>
<svg class="a" style="left:730px;top:37px" width="20" height="20" viewBox="0 0 20 20"><rect x="4" y="6.5" width="2.6" height="7" rx="1.3" fill="#2f7cf6"/><rect x="8.7" y="3.5" width="2.6" height="13" rx="1.3" fill="#2f7cf6"/><rect x="13.4" y="6.5" width="2.6" height="7" rx="1.3" fill="#2f7cf6"/></svg>
<div class="t" style="left:756px;top:39px;width:18px;overflow:hidden;font-size:14px;line-height:16px;color:#e6e4df;-webkit-mask-image:linear-gradient(90deg,#000 62%,transparent 100%)">AI</div>
<div class="a" style="left:782px;top:39px;width:2px;height:16px;background:#ebe9e5"></div>
<svg class="a" style="left:792px;top:37px" width="20" height="20" viewBox="0 0 20 20"><circle cx="10" cy="10" r="9.2" fill="none" stroke="#9c9a95" stroke-width="1.3" stroke-dasharray="5.2 2.5" transform="rotate(-80 10 10)"/><circle cx="10" cy="10" r="6.5" fill="#3a3935"/><path d="M7 14 Q9 7 13 6" stroke="#111" stroke-width="1.5" fill="none"/></svg>
<div class="t" style="left:818px;top:39px;width:18px;overflow:hidden;font-size:14px;line-height:16px;color:#e6e4df;-webkit-mask-image:linear-gradient(90deg,#000 62%,transparent 100%)">Lo</div>
<div class="a" style="left:844px;top:39px;width:2px;height:16px;background:#ebe9e5"></div>
<svg class="a" style="left:854px;top:37px" width="20" height="20" viewBox="0 0 20 20"><path d="M10 2.3 A7.7 7.7 0 1 1 6.2 16.7 L2.6 17.6 L3.6 14 A7.7 7.7 0 0 1 10 2.3 Z" fill="none" stroke="#20b858" stroke-width="1.7"/><path d="M7.3 7 Q7 9.5 9.5 12 Q12 14 13.6 12.9 L12.5 11.5 L11.3 12 Q9.5 11 8.7 9.2 L9.3 8 L8.4 6.6 Z" fill="#20b858"/></svg>
<div class="t" style="left:880px;top:39px;width:18px;overflow:hidden;font-size:14px;line-height:16px;color:#e6e4df;-webkit-mask-image:linear-gradient(90deg,#000 62%,transparent 100%)">W</div>
<div class="a" style="left:906px;top:39px;width:2px;height:16px;background:#ebe9e5"></div>
<svg class="a" style="left:916px;top:37px" width="20" height="20" viewBox="0 0 20 20"><g fill="none" stroke="#111" stroke-width="1.5"><ellipse cx="10" cy="10" rx="7" ry="3.3"/><ellipse cx="10" cy="10" rx="7" ry="3.3" transform="rotate(60 10 10)"/><ellipse cx="10" cy="10" rx="7" ry="3.3" transform="rotate(120 10 10)"/></g></svg>
<div class="t" style="left:942px;top:39px;width:18px;overflow:hidden;font-size:14px;line-height:16px;color:#e6e4df;-webkit-mask-image:linear-gradient(90deg,#000 62%,transparent 100%)">Fr</div>
<div class="a" style="left:968px;top:39px;width:2px;height:16px;background:#ebe9e5"></div>
<svg class="a" style="left:978px;top:37px" width="20" height="20" viewBox="0 0 20 20"><rect x="2" y="2" width="16" height="16" fill="#13213f"/><text x="10" y="12.6" font-family="Liberation Sans" font-size="6.8" font-weight="bold" fill="#e2d84a" text-anchor="middle" letter-spacing="-0.2">TKC</text></svg>
<div class="t" style="left:1004px;top:39px;width:18px;overflow:hidden;font-size:14px;line-height:16px;color:#e6e4df;-webkit-mask-image:linear-gradient(90deg,#000 62%,transparent 100%)">: T</div>
<div class="a" style="left:1030px;top:39px;width:2px;height:16px;background:#ebe9e5"></div>
<svg class="a" style="left:1040px;top:37px" width="20" height="20" viewBox="0 0 20 20"><rect x="2" y="2" width="16" height="16" fill="#13213f"/><text x="10" y="12.6" font-family="Liberation Sans" font-size="6.8" font-weight="bold" fill="#e2d84a" text-anchor="middle" letter-spacing="-0.2">TKC</text></svg>
<div class="t" style="left:1066px;top:39px;width:18px;overflow:hidden;font-size:14px;line-height:16px;color:#e6e4df;-webkit-mask-image:linear-gradient(90deg,#000 62%,transparent 100%)">: T</div>
<div class="a" style="left:1092px;top:39px;width:2px;height:16px;background:#ebe9e5"></div>
<svg class="a" style="left:1102px;top:37px" width="20" height="20" viewBox="0 0 20 20"><path d="M4.5 12.5 L8 3.5 L8.6 12.5 Z M9.2 12.5 L11.2 2.5 L16 12.5 Z" fill="#f39a2b"/><path d="M10.2 4 L12 12" stroke="#ffd08a" stroke-width=".6"/><text x="10" y="17" font-family="Liberation Sans" font-size="5.6" font-style="italic" font-weight="bold" fill="#4050b0" stroke="#c8cce8" stroke-width=".25" text-anchor="middle">PMA</text></svg>
<div class="t" style="left:1128px;top:39px;width:18px;overflow:hidden;font-size:14px;line-height:16px;color:#e6e4df;-webkit-mask-image:linear-gradient(90deg,#000 62%,transparent 100%)">19</div>
<div class="a" style="left:1154px;top:39px;width:2px;height:16px;background:#ebe9e5"></div>
<svg class="a" style="left:1164px;top:37px" width="20" height="20" viewBox="0 0 20 20"><path d="M4.5 12.5 L8 3.5 L8.6 12.5 Z M9.2 12.5 L11.2 2.5 L16 12.5 Z" fill="#f39a2b"/><path d="M10.2 4 L12 12" stroke="#ffd08a" stroke-width=".6"/><text x="10" y="17" font-family="Liberation Sans" font-size="5.6" font-style="italic" font-weight="bold" fill="#4050b0" stroke="#c8cce8" stroke-width=".25" text-anchor="middle">PMA</text></svg>
<div class="t" style="left:1190px;top:39px;width:18px;overflow:hidden;font-size:14px;line-height:16px;color:#e6e4df;-webkit-mask-image:linear-gradient(90deg,#000 62%,transparent 100%)">19</div>
<div class="a" style="left:1216px;top:39px;width:2px;height:16px;background:#ebe9e5"></div>
<svg class="a" style="left:1226px;top:37px" width="20" height="20" viewBox="0 0 20 20"><path d="M4.5 12.5 L8 3.5 L8.6 12.5 Z M9.2 12.5 L11.2 2.5 L16 12.5 Z" fill="#f39a2b"/><path d="M10.2 4 L12 12" stroke="#ffd08a" stroke-width=".6"/><text x="10" y="17" font-family="Liberation Sans" font-size="5.6" font-style="italic" font-weight="bold" fill="#4050b0" stroke="#c8cce8" stroke-width=".25" text-anchor="middle">PMA</text></svg>
<div class="t" style="left:1252px;top:39px;width:18px;overflow:hidden;font-size:14px;line-height:16px;color:#e6e4df;-webkit-mask-image:linear-gradient(90deg,#000 62%,transparent 100%)">19</div>
<div class="a" style="left:1278px;top:39px;width:2px;height:16px;background:#ebe9e5"></div>
<svg class="a" style="left:1288px;top:37px" width="20" height="20" viewBox="0 0 20 20"><path d="M4.5 12.5 L8 3.5 L8.6 12.5 Z M9.2 12.5 L11.2 2.5 L16 12.5 Z" fill="#f39a2b"/><path d="M10.2 4 L12 12" stroke="#ffd08a" stroke-width=".6"/><text x="10" y="17" font-family="Liberation Sans" font-size="5.6" font-style="italic" font-weight="bold" fill="#4050b0" stroke="#c8cce8" stroke-width=".25" text-anchor="middle">PMA</text></svg>
<div class="t" style="left:1314px;top:39px;width:18px;overflow:hidden;font-size:14px;line-height:16px;color:#e6e4df;-webkit-mask-image:linear-gradient(90deg,#000 62%,transparent 100%)">19</div>
<div class="a" style="left:1340px;top:39px;width:2px;height:16px;background:#ebe9e5"></div>
<svg class="a" style="left:1350px;top:37px" width="20" height="20" viewBox="0 0 20 20"><circle cx="10" cy="10" r="6.6" fill="#45433e"/><path transform="translate(1.6 1.6) scale(0.7)" d="M12 2C6.48 2 2 6.48 2 12s4.48 10 10 10 10-4.48 10-10S17.52 2 12 2zm-1 17.93c-3.95-.49-7-3.85-7-7.93 0-.62.08-1.21.21-1.79L9 15v1c0 1.1.9 2 2 2v1.93zm6.9-2.54c-.26-.81-1-1.39-1.9-1.39h-1v-3c0-.55-.45-1-1-1H8v-2h2c.55 0 1-.45 1-1V7h2c1.1 0 2-.9 2-2v-.41c2.93 1.19 5 4.06 5 7.41 0 2.08-.8 3.97-2.1 5.39z" fill="#5b6470"/></svg>
<div class="t" style="left:1376px;top:39px;width:18px;overflow:hidden;font-size:14px;line-height:16px;color:#e6e4df;-webkit-mask-image:linear-gradient(90deg,#000 62%,transparent 100%)">Di</div>
<div class="a" style="left:1402px;top:39px;width:2px;height:16px;background:#ebe9e5"></div>
<svg class="a" style="left:1412px;top:37px" width="20" height="20" viewBox="0 0 20 20"><circle cx="10" cy="10" r="6.6" fill="#45433e"/><path transform="translate(1.6 1.6) scale(0.7)" d="M12 2C6.48 2 2 6.48 2 12s4.48 10 10 10 10-4.48 10-10S17.52 2 12 2zm-1 17.93c-3.95-.49-7-3.85-7-7.93 0-.62.08-1.21.21-1.79L9 15v1c0 1.1.9 2 2 2v1.93zm6.9-2.54c-.26-.81-1-1.39-1.9-1.39h-1v-3c0-.55-.45-1-1-1H8v-2h2c.55 0 1-.45 1-1V7h2c1.1 0 2-.9 2-2v-.41c2.93 1.19 5 4.06 5 7.41 0 2.08-.8 3.97-2.1 5.39z" fill="#5b6470"/></svg>
<div class="t" style="left:1438px;top:39px;width:18px;overflow:hidden;font-size:14px;line-height:16px;color:#e6e4df;-webkit-mask-image:linear-gradient(90deg,#000 62%,transparent 100%)">AE</div>
<div class="a" style="left:1464px;top:39px;width:2px;height:16px;background:#ebe9e5"></div>
<svg class="a" style="left:1474px;top:37px" width="20" height="20" viewBox="0 0 20 20"><rect x="2" y="2" width="16" height="16" fill="#13213f"/><text x="10" y="12.6" font-family="Liberation Sans" font-size="6.8" font-weight="bold" fill="#e2d84a" text-anchor="middle" letter-spacing="-0.2">TKC</text><circle cx="16" cy="17" r="3" fill="#1a5fd8"/></svg>
<div class="t" style="left:1500px;top:39px;width:18px;overflow:hidden;font-size:14px;line-height:16px;color:#e6e4df;-webkit-mask-image:linear-gradient(90deg,#000 62%,transparent 100%)">: T</div>
<div class="a" style="left:1526px;top:39px;width:2px;height:16px;background:#ebe9e5"></div>
<svg class="a" style="left:1536px;top:37px" width="20" height="20" viewBox="0 0 20 20"><circle cx="10" cy="10" r="8" fill="#f26a3b"/><path d="M12 5 L7 10 L12 15" fill="none" stroke="#fff" stroke-width="1.6"/><path d="M13 8 V12" stroke="#fff" stroke-width="1"/></svg>
<div class="t" style="left:1562px;top:39px;width:18px;overflow:hidden;font-size:14px;line-height:16px;color:#e6e4df;-webkit-mask-image:linear-gradient(90deg,#000 62%,transparent 100%)">im</div>
<div class="a" style="left:1588px;top:39px;width:2px;height:16px;background:#ebe9e5"></div>
<svg class="a" style="left:1598px;top:37px" width="20" height="20" viewBox="0 0 20 20"><circle cx="10" cy="10" r="9.2" fill="none" stroke="#9c9a95" stroke-width="1.3" stroke-dasharray="5.2 2.5" transform="rotate(-80 10 10)"/><circle cx="10" cy="10" r="7.3" fill="#fff"/><g transform="translate(10 10) scale(1.25) translate(-10 -10)"><path d="M14.5 9.3 H10 V11 H12.8 A3 3 0 1 1 12 7.3 L13.2 6.1 A4.7 4.7 0 1 0 14.5 9.3 Z" fill="#4285f4"/><path d="M6 7.5 A4.7 4.7 0 0 1 13.2 6.1 L12 7.3 A3 3 0 0 0 7.3 8.4 Z" fill="#ea4335"/><path d="M5.5 10 A4.7 4.7 0 0 0 6 12.5 L7.4 11.4 A3 3 0 0 1 7.3 8.4 L6 7.5 A4.7 4.7 0 0 0 5.5 10 Z" fill="#fbbc05"/><path d="M6 12.5 A4.7 4.7 0 0 0 13.5 12.6 L12.2 11.5 A3 3 0 0 1 7.4 11.4 Z" fill="#34a853"/></g></svg>
<div class="t" style="left:1624px;top:39px;width:18px;overflow:hidden;font-size:14px;line-height:16px;color:#e6e4df;-webkit-mask-image:linear-gradient(90deg,#000 62%,transparent 100%)">in_</div>
<svg class="a" style="left:1640px;top:32px" width="84" height="36" viewBox="0 0 84 36"><path d="M0 35 Q10 35 12 26 L13 10 Q14 1 24 1 H60 Q70 1 71 10 L72 26 Q74 35 84 35 Z" fill="#f1f0ee"/></svg>
<svg class="a" style="left:1660px;top:37px" width="20" height="20" viewBox="0 0 20 20"><circle cx="10" cy="10" r="6.6" fill="#f1f0ee"/><path transform="translate(1.6 1.6) scale(0.7)" d="M12 2C6.48 2 2 6.48 2 12s4.48 10 10 10 10-4.48 10-10S17.52 2 12 2zm-1 17.93c-3.95-.49-7-3.85-7-7.93 0-.62.08-1.21.21-1.79L9 15v1c0 1.1.9 2 2 2v1.93zm6.9-2.54c-.26-.81-1-1.39-1.9-1.39h-1v-3c0-.55-.45-1-1-1H8v-2h2c.55 0 1-.45 1-1V7h2c1.1 0 2-.9 2-2v-.41c2.93 1.19 5 4.06 5 7.41 0 2.08-.8 3.97-2.1 5.39z" fill="#4b5360"/></svg>
<svg class="a" style="left:1687px;top:40px" width="14" height="14" viewBox="0 0 14 14"><path d="M3 3 L11 11 M11 3 L3 11" stroke="#1f1f1f" stroke-width="1.5"/></svg>
<svg class="a" style="left:1722px;top:37px" width="20" height="20" viewBox="0 0 20 20"><circle cx="10" cy="10" r="6.6" fill="#403e3a"/><path transform="translate(1.6 1.6) scale(0.7)" d="M12 2C6.48 2 2 6.48 2 12s4.48 10 10 10 10-4.48 10-10S17.52 2 12 2zm-1 17.93c-3.95-.49-7-3.85-7-7.93 0-.62.08-1.21.21-1.79L9 15v1c0 1.1.9 2 2 2v1.93zm6.9-2.54c-.26-.81-1-1.39-1.9-1.39h-1v-3c0-.55-.45-1-1-1H8v-2h2c.55 0 1-.45 1-1V7h2c1.1 0 2-.9 2-2v-.41c2.93 1.19 5 4.06 5 7.41 0 2.08-.8 3.97-2.1 5.39z" fill="#525b66"/></svg>
<div class="t" style="left:1748px;top:39px;width:22px;overflow:hidden;font-size:14px;line-height:16px;color:#e6e4df">19</div>
<div class="a" style="left:1774px;top:39px;width:2px;height:16px;background:#ebe9e5"></div>
<svg class="a" style="left:1784px;top:39px" width="16" height="16" viewBox="0 0 16 16"><path d="M8 2 V14 M2 8 H14" stroke="#e6e4df" stroke-width="1.7"/></svg>
<svg class="a" style="left:1858px;top:38px" width="58" height="18" viewBox="0 0 58 18"><circle cx="9" cy="9" r="8.2" fill="#65625c"/><rect x="5" y="8.3" width="8" height="1.4" fill="#2e2d2a"/><circle cx="29" cy="9" r="8.2" fill="#65625c"/><rect x="25" y="5.5" width="8" height="7" fill="none" stroke="#2e2d2a" stroke-width="1.3"/><circle cx="49" cy="9" r="8.2" fill="#e9552a"/><path d="M46.3 6.3 L51.7 11.7 M51.7 6.3 L46.3 11.7" stroke="#f6f6f6" stroke-width="1.3"/></svg>
<div class="a" style="left:0;top:67px;width:1920px;height:12px;background:#f1f0ee;border-radius:9px 9px 0 0"></div>
<svg class="a" style="left:14px;top:82px" width="16" height="16" viewBox="0 0 16 16"><path d="M14 8 H3 M8 3 L3 8 L8 13" fill="none" stroke="#454545" stroke-width="1.8"/></svg>
<svg class="a" style="left:50px;top:82px" width="16" height="16" viewBox="0 0 16 16"><path d="M2 8 H13 M8 3 L13 8 L8 13" fill="none" stroke="#a3a3a3" stroke-width="1.8"/></svg>
<svg class="a" style="left:86px;top:82px" width="16" height="16" viewBox="0 0 16 16"><path d="M13.2 8 A5.4 5.4 0 1 1 11.6 4.2" fill="none" stroke="#454545" stroke-width="1.8"/><path d="M9.5 2 H14 V6.5 Z" fill="#454545"/></svg>
<div class="a" style="left:120px;top:73px;width:1449px;height:34px;border-radius:17px;background:#fff"></div>
<div class="a" style="left:125px;top:78px;width:108px;height:24px;border-radius:12px;background:#efeeec"></div>
<svg class="a" style="left:129px;top:83px" width="16" height="14" viewBox="0 0 16 14"><path d="M8 1.8 L14.3 12.2 H1.7 Z" fill="none" stroke="#2b2a28" stroke-width="1.3" stroke-linejoin="miter"/><rect x="7.35" y="5.5" width="1.3" height="3.8" fill="#5a5a58"/><rect x="7.35" y="10" width="1.3" height="1.2" fill="#5a5a58"/></svg>
<div class="t" style="left:149px;top:82px;font-size:14.5px;line-height:17px;color:#2b2a28;-webkit-text-stroke:0.45px #2b2a28;letter-spacing:0.55px">Not secure</div>
<div class="t" style="left:241px;top:82px;font-size:14px;line-height:17px;color:#1f1f1f">192.168.1.242<span style="color:#5e5e5e">/pmo/viewtask.php?page=9&amp;mod_id=4</span></div>
<svg class="a" style="left:1537px;top:82px" width="16" height="16" viewBox="0 0 16 16"><path d="M8 1.5 L9.9 6 L14.6 6.2 L10.9 9.2 L12.2 13.9 L8 11.2 L3.8 13.9 L5.1 9.2 L1.4 6.2 L6.1 6 Z" fill="none" stroke="#454545" stroke-width="1.4" stroke-linejoin="round"/></svg>
<svg class="a" style="left:1587px;top:82px" width="18" height="16" viewBox="0 0 18 16"><path d="M2 4 H6 V2.8 A1.8 1.8 0 0 1 9.6 2.8 V4 H13 V7 H14 A1.8 1.8 0 0 1 14 10.6 H13 V14 H2 Z" fill="none" stroke="#2b2a28" stroke-width="1.6" stroke-linejoin="round"/></svg>
<div class="a" style="left:1621px;top:83px;width:2px;height:14px;background:#454340"></div>
<div class="a" style="left:1632px;top:73px;width:141px;height:34px;border-radius:17px;background:#e2e0de"></div>
<svg class="a" style="left:1642px;top:80px" width="20" height="20" viewBox="0 0 20 20"><circle cx="10" cy="10" r="9" fill="none" stroke="#4a6bd0" stroke-width="1.2" stroke-dasharray="3 1.5"/><circle cx="10" cy="10" r="7" fill="#d9b8a8"/><path d="M3.5 8 Q5 2.5 10 3 Q15 3 16.5 8 Q13 6 10 6.5 Q6 6.5 3.5 8 Z" fill="#2a2320"/><path d="M4 14 Q10 11 16 14 Q13 17 10 17 Q6 17 4 14 Z" fill="#d8325a"/></svg>
<div class="t" style="left:1668px;top:82px;font-size:15.6px;line-height:17px;color:#1f1f1f">Verify it's you</div>
<div class="a" style="left:1778px;top:73px;width:136px;height:34px;border-radius:17px;background:#4a4740"></div>
<div class="t" style="left:1793px;top:82px;font-size:15.1px;line-height:17px;color:#f2f1ef">Finish update</div>
<svg class="a" style="left:1893px;top:81px" width="8" height="18" viewBox="0 0 8 18"><circle cx="4" cy="2.5" r="1.6" fill="#f2f1ef"/><circle cx="4" cy="9" r="1.6" fill="#f2f1ef"/><circle cx="4" cy="15.5" r="1.6" fill="#f2f1ef"/></svg>
<svg class="a" style="left:18px;top:119px" width="16" height="16" viewBox="0 0 16 16"><g fill="none" stroke="#5f5f5f" stroke-width="1.6"><rect x="1.5" y="1.5" width="5" height="5"/><rect x="9.5" y="1.5" width="5" height="5"/><rect x="1.5" y="9.5" width="5" height="5"/><rect x="9.5" y="9.5" width="5" height="5"/></g></svg>
<div class="a" style="left:48px;top:119px;width:2px;height:15px;background:#3a3936"></div>
<svg class="a" style="left:62px;top:117px" width="20" height="20" viewBox="0 0 20 20"><rect x="2" y="2" width="16" height="16" fill="#fff"/><path d="M5 12 L8 3.5 L8.6 12 Z M9.2 12 L11 2.8 L15 12 Z" fill="#f39a2b"/><text x="10" y="17.3" font-family="Liberation Sans" font-size="5.8" font-style="italic" font-weight="bold" fill="#2a3a9a" text-anchor="middle">PMA</text></svg>
<div class="t" style="left:86px;top:118px;font-size:15.1px;line-height:17px;color:#3a3a3a;letter-spacing:0.200px">192.168.1.177...</div>
<svg class="a" style="left:216px;top:117px" width="20" height="20" viewBox="0 0 20 20"><ellipse cx="10" cy="11" rx="4.5" ry="6.5" fill="#2a2a2a"/><ellipse cx="10.5" cy="12" rx="2.6" ry="4.5" fill="#f2f2f2"/><circle cx="10" cy="5" r="2.5" fill="#2a2a2a"/><ellipse cx="13" cy="15" rx="2.5" ry="2" fill="#3aa03a"/><ellipse cx="7" cy="17" rx="2" ry="1" fill="#e8a020"/></svg>
<div class="t" style="left:240px;top:118px;font-size:15.1px;line-height:17px;color:#3a3a3a;letter-spacing:0.016px">e-Padasalai ho...</div>
<svg class="a" style="left:370px;top:117px" width="20" height="20" viewBox="0 0 20 20"><rect x="2" y="2" width="16" height="16" fill="#fff"/><path d="M5 12 L8 3.5 L8.6 12 Z M9.2 12 L11 2.8 L15 12 Z" fill="#f39a2b"/><text x="10" y="17.3" font-family="Liberation Sans" font-size="5.8" font-style="italic" font-weight="bold" fill="#2a3a9a" text-anchor="middle">PMA</text></svg>
<div class="t" style="left:394px;top:118px;font-size:15.1px;line-height:17px;color:#3a3a3a;letter-spacing:0.227px">103.94.173.11...</div>
<svg class="a" style="left:524px;top:117px" width="20" height="20" viewBox="0 0 20 20"><rect x="2" y="2" width="16" height="16" fill="#fff"/><path d="M5 12 L8 3.5 L8.6 12 Z M9.2 12 L11 2.8 L15 12 Z" fill="#f39a2b"/><text x="10" y="17.3" font-family="Liberation Sans" font-size="5.8" font-style="italic" font-weight="bold" fill="#2a3a9a" text-anchor="middle">PMA</text></svg>
<div class="t" style="left:548px;top:118px;font-size:15.1px;line-height:17px;color:#3a3a3a;letter-spacing:0.200px">34.231.181.14...</div>
<svg class="a" style="left:678px;top:117px" width="20" height="20" viewBox="0 0 20 20"><rect x="2" y="2" width="16" height="16" rx="2" fill="#1a73e8"/><path d="M11 4 L6 11 H9.5 L8.5 16 L14 8.5 H10.5 Z" fill="#fff"/></svg>
<div class="t" style="left:702px;top:118px;font-size:15.1px;line-height:17px;color:#3a3a3a;letter-spacing:0.328px">Dialog Overvie...</div>
<svg class="a" style="left:832px;top:117px" width="20" height="20" viewBox="0 0 20 20"><rect x="2" y="2" width="16" height="16" fill="#13213f"/><text x="10" y="12.6" font-family="Liberation Sans" font-size="6.8" font-weight="bold" fill="#e2d84a" text-anchor="middle" letter-spacing="-0.2">TKC</text></svg>
<div class="t" style="left:856px;top:118px;font-size:15.1px;line-height:17px;color:#3a3a3a;letter-spacing:0.133px">: FAM66 Const...</div>
<svg class="a" style="left:986px;top:117px" width="20" height="20" viewBox="0 0 20 20"><path d="M10 17 L2.5 10.5 L4.5 3 L6.8 9 H13.2 L15.5 3 L17.5 10.5 Z" fill="#fc6d26"/><path d="M10 17 L6.8 9 H13.2 Z" fill="#e24329"/><path d="M2.5 10.5 L6.8 9 L10 17 Z" fill="#fca326"/><path d="M17.5 10.5 L13.2 9 L10 17 Z" fill="#fca326"/></svg>
<div class="t" style="left:1010px;top:118px;font-size:15.1px;line-height:17px;color:#3a3a3a;letter-spacing:0.031px">a (0cf092c1) ·...</div>
<svg class="a" style="left:1140px;top:117px" width="20" height="20" viewBox="0 0 20 20"><rect x="2" y="4.5" width="16" height="11" rx="3" fill="#f00"/><path d="M8 7 L13 10 L8 13 Z" fill="#fff"/></svg>
<div class="t" style="left:1164px;top:118px;font-size:15.1px;line-height:17px;color:#3a3a3a;letter-spacing:0.266px">Cloud Firestor...</div>
<svg class="a" style="left:1294px;top:117px" width="20" height="20" viewBox="0 0 20 20"><circle cx="10" cy="10" r="6.6" fill="#f1f0ee"/><path transform="translate(1.6 1.6) scale(0.7)" d="M12 2C6.48 2 2 6.48 2 12s4.48 10 10 10 10-4.48 10-10S17.52 2 12 2zm-1 17.93c-3.95-.49-7-3.85-7-7.93 0-.62.08-1.21.21-1.79L9 15v1c0 1.1.9 2 2 2v1.93zm6.9-2.54c-.26-.81-1-1.39-1.9-1.39h-1v-3c0-.55-.45-1-1-1H8v-2h2c.55 0 1-.45 1-1V7h2c1.1 0 2-.9 2-2v-.41c2.93 1.19 5 4.06 5 7.41 0 2.08-.8 3.97-2.1 5.39z" fill="#3c3c3c"/></svg>
<div class="t" style="left:1319px;top:118px;font-size:15.1px;line-height:17px;color:#3a3a3a;letter-spacing:-0.321px">bypassme</div>
<svg class="a" style="left:1400px;top:117px" width="20" height="20" viewBox="0 0 20 20"><ellipse cx="10" cy="11" rx="4.5" ry="6.5" fill="#2a2a2a"/><ellipse cx="10.5" cy="12" rx="2.6" ry="4.5" fill="#f2f2f2"/><circle cx="10" cy="5" r="2.5" fill="#2a2a2a"/><ellipse cx="13" cy="15" rx="2.5" ry="2" fill="#3aa03a"/><ellipse cx="7" cy="17" rx="2" ry="1" fill="#e8a020"/></svg>
<div class="t" style="left:1424px;top:118px;font-size:15.1px;line-height:17px;color:#3a3a3a;letter-spacing:0.267px">192.168.2.108...</div>
<svg class="a" style="left:1554px;top:117px" width="20" height="20" viewBox="0 0 20 20"><ellipse cx="10" cy="11" rx="4.5" ry="6.5" fill="#2a2a2a"/><ellipse cx="10.5" cy="12" rx="2.6" ry="4.5" fill="#f2f2f2"/><circle cx="10" cy="5" r="2.5" fill="#2a2a2a"/><ellipse cx="13" cy="15" rx="2.5" ry="2" fill="#3aa03a"/><ellipse cx="7" cy="17" rx="2" ry="1" fill="#e8a020"/></svg>
<div class="t" style="left:1578px;top:118px;font-size:15.1px;line-height:17px;color:#3a3a3a;letter-spacing:0.125px">spe</div>
<svg class="a" style="left:1736px;top:119px" width="16" height="16" viewBox="0 0 16 16"><path d="M3 4 L7 8 L3 12 M8 4 L12 8 L8 12" fill="none" stroke="#5f5f5f" stroke-width="1.5"/></svg>
<div class="a" style="left:1766px;top:119px;width:2px;height:15px;background:#3a3936"></div>
<svg class="a" style="left:1783px;top:118px" width="18" height="18" viewBox="0 0 18 18"><path d="M1.5 3.5 H6.5 L8.2 5.3 H16.5 V15 H1.5 Z" fill="none" stroke="#3a3936" stroke-width="1.5" stroke-linejoin="round"/><path d="M1.5 7 H16.5" stroke="#3a3936" stroke-width="1.2"/></svg>
<div class="t" style="left:1808px;top:118px;font-size:15.2px;line-height:17px;color:#3a3a3a">All Bookmarks</div>
<div class="a" style="left:170px;top:1041px;width:38px;height:38px;border-radius:6px;background:rgba(255,255,255,0.16)"></div>
<svg class="a" style="left:10px;top:1048px" width="24" height="24" viewBox="0 0 24 24"><path d="M3 5 L19 2 L22 20 L6 23 Z" fill="#22272e"/><path d="M17 3.5 L21.5 6 V18 L17 21 Z" fill="#2f8fe0"/><path d="M17 5 L8 12 L5.5 10 L4.5 11 L7 13.5 L4.5 16 L5.5 17 L8 15 L17 20" fill="none" stroke="#2f8fe0" stroke-width="1.8"/></svg>
<svg class="a" style="left:51px;top:1048px" width="24" height="24" viewBox="0 0 24 24"><rect x="2.5" y="2" width="19" height="20" rx="1.5" fill="#bdbdbd" stroke="#8c8c8c"/><rect x="4.5" y="4" width="15" height="7" fill="#2b2b2b"/><rect x="5.5" y="6" width="13" height="4" fill="#f08a3c"/><rect x="5.5" y="7.5" width="13" height="1" fill="#fff3c0"/><rect x="4.5" y="13" width="15" height="7" fill="#cfcfcf" stroke="#999" stroke-width=".6"/><rect x="9" y="15" width="6" height="3" rx=".8" fill="#fafafa" stroke="#666" stroke-width=".8"/></svg>
<svg class="a" style="left:93px;top:1048px" width="24" height="24" viewBox="0 0 24 24"><circle cx="12" cy="12" r="11" fill="#1d5fc9"/><circle cx="12.5" cy="11" r="9" fill="#4aa3f0"/><path d="M3 13 L11 9 L21 11 L16 19 L5 19 Z" fill="#f5f5f5"/><path d="M3 13 L12 16 L21 11" fill="none" stroke="#c9cfd8" stroke-width=".8"/></svg>
<svg class="a" style="left:135px;top:1048px" width="24" height="24" viewBox="0 0 24 24"><rect x="4" y="2" width="17" height="21" rx="1.5" fill="#c8c8c8" stroke="#8a8a8a"/><rect x="6" y="4" width="13" height="4" fill="#e8eae6" stroke="#999" stroke-width=".5"/><g fill="#555"><rect x="6" y="10" width="2.5" height="2"/><rect x="9.5" y="10" width="2.5" height="2"/><rect x="13" y="10" width="2.5" height="2"/><rect x="6" y="13.5" width="2.5" height="2"/><rect x="9.5" y="13.5" width="2.5" height="2"/><rect x="13" y="13.5" width="2.5" height="2"/><rect x="6" y="17" width="6" height="2"/><rect x="13" y="17" width="2.5" height="2"/></g><rect x="16.5" y="10" width="2.5" height="9" fill="#5a8fb0"/></svg>
<svg class="a" style="left:177px;top:1048px" width="24" height="24" viewBox="0 0 24 24"><circle cx="12" cy="12" r="11.5" fill="#db4437"/><path d="M12 12 L2 6.2 A11.5 11.5 0 0 0 6.2 22 Z" fill="#0f9d58"/><path d="M12 12 L6.2 22 A11.5 11.5 0 0 0 23.5 12 L22 6.2 Z" fill="#ffcd40"/><path d="M12 12 L2 6.2 A11.5 11.5 0 0 1 22 6.2 Z" fill="#db4437"/><circle cx="12" cy="12" r="5.5" fill="#fff"/><circle cx="12" cy="12" r="4.3" fill="#4285f4"/></svg>
<svg class="a" style="left:219px;top:1048px" width="24" height="24" viewBox="0 0 24 24"><rect x="0.5" y="0.5" width="23" height="23" fill="#bf0000"/><rect x="2" y="2" width="20" height="20" fill="#b80a0a" stroke="#a00" stroke-dasharray="1 1"/><text x="12" y="19" font-family="Liberation Sans" font-size="17" font-weight="bold" font-style="italic" fill="#fff" text-anchor="middle">Fz</text></svg>
<svg class="a" style="left:261px;top:1048px" width="24" height="24" viewBox="0 0 24 24"><path d="M4 1 H15.5 L21 6.5 V23 H4 Z" fill="#fdfdfd" stroke="#1e9a2e" stroke-width="1.2"/><path d="M15.5 1 L21 6.5 H15.5 Z" fill="#1e9a2e"/><rect x="7" y="9" width="11" height="11" fill="#3bb54a"/><g stroke="#e8f5e8" stroke-width=".7"><line x1="7" y1="12" x2="18" y2="12"/><line x1="7" y1="15" x2="18" y2="15"/><line x1="7" y1="18" x2="18" y2="18"/><line x1="10.5" y1="9" x2="10.5" y2="20"/><line x1="14" y1="9" x2="14" y2="20"/></g><rect x="12" y="16" width="2" height="4" fill="#3a7fd0"/><rect x="15" y="15" width="2" height="5" fill="#f0a030"/></svg>
<svg class="a" style="left:303px;top:1048px" width="24" height="24" viewBox="0 0 24 24"><rect x="1" y="1" width="22" height="22" rx="2" fill="#ef443b"/><path d="M4 12 L8.5 7.5 L13 12 L8.5 16.5 Z" fill="#fff"/><path d="M14 8 L18 12 L14 16" fill="none" stroke="#fff" stroke-width="2.2"/></svg>
<svg class="a" style="left:345px;top:1048px" width="24" height="24" viewBox="0 0 24 24"><defs><linearGradient id="ffg" x1="1" y1="0" x2="0" y2="1"><stop offset="0" stop-color="#ffe23a"/><stop offset=".45" stop-color="#ff8a1c"/><stop offset=".8" stop-color="#ff3a4a"/><stop offset="1" stop-color="#e8208a"/></linearGradient></defs><path d="M12 1 Q19 6 21.5 11 Q23 19 16 22.5 Q12 24 8 22.5 Q1.5 20 1.5 13 Q1.5 9 4 6 L4.5 8.5 L7 5.5 L7 8 Q9.5 6 12.5 7 Q11 4 12 1 Z" fill="url(#ffg)"/><circle cx="12" cy="12.8" r="4.6" fill="#7b44e8"/><path d="M5 11 Q7 8.5 10.5 9.5 Q8.5 10 9 11.5 Q11 13 14 12 Q14 16 10.5 16.5 Q14 17.5 16.5 14.5" fill="none" stroke="#ff8a1c" stroke-width="1.8"/><path d="M12.5 7 Q15.5 8 16.5 11" fill="none" stroke="#ffcf2e" stroke-width="1.4"/></svg>
<svg class="a" style="left:387px;top:1048px" width="24" height="24" viewBox="0 0 24 24"><rect x="0.5" y="0.5" width="23" height="23" rx="9" fill="#0b5cff"/><text x="12" y="14.2" font-family="Liberation Sans" font-size="6.6" fill="#fff" text-anchor="middle" letter-spacing="-0.2">zoom</text></svg>
<svg class="a" style="left:429px;top:1048px" width="24" height="24" viewBox="0 0 24 24"><path d="M3 9.2 L5 7.6 L17 17.5 V21.5 Z" fill="#1c8ad4"/><path d="M3 14.8 L5 16.4 L17 6.5 V2.5 Z" fill="#1f97e0"/><path d="M16.5 1.2 L21.8 3.8 V20.2 L16.5 22.8 Z" fill="#2aa8f2"/><path d="M16.5 6.8 V17.2 L11 12 Z" fill="#5a3d44"/></svg>
<svg class="a" style="left:471px;top:1048px" width="24" height="24" viewBox="0 0 24 24"><path d="M4 1 H15.5 L21 6.5 V23 H4 Z" fill="#fdfdfd" stroke="#c1492b" stroke-width="1.2"/><path d="M15.5 1 L21 6.5 H15.5 Z" fill="#c1492b"/><rect x="6.5" y="8" width="12" height="8" fill="#f7c7b2" stroke="#d66b48" stroke-width=".8"/><rect x="13" y="11" width="4" height="3" fill="#5aa83a"/><path d="M10 19 L12.5 17 L15 19" fill="none" stroke="#555" stroke-width=".9"/></svg>
<svg class="a" style="left:513px;top:1048px" width="24" height="24" viewBox="0 0 24 24"><path d="M4 1 H15.5 L21 6.5 V23 H4 Z" fill="#fdfdfd" stroke="#1a68b5" stroke-width="1.2"/><path d="M15.5 1 L21 6.5 H15.5 Z" fill="#1a68b5"/><rect x="6" y="9" width="10" height="8" fill="#6aa9dc"/><rect x="8" y="7" width="10" height="8" fill="#2e6ea8"/><path d="M9 14 L12 10 L14 12 L15 11 L17 14 Z" fill="#9fd3f5"/></svg>
<svg class="a" style="left:555px;top:1048px" width="24" height="24" viewBox="0 0 24 24"><path d="M4 1 H15.5 L21 6.5 V23 H4 Z" fill="#fdfdfd" stroke="#c9a20a" stroke-width="1.2"/><path d="M15.5 1 L21 6.5 H15.5 Z" fill="#c9a20a"/><circle cx="10" cy="11" r="3.5" fill="#f2a898"/><rect x="11" y="12" width="7" height="6" fill="#e8c42a"/><path d="M6 19 L9 14 L12 19 Z" fill="#d4d84a"/></svg>
<div class="a" style="left:19.9px;top:1075.2px;width:3.6px;height:3.6px;border-radius:50%;background:#e95420"></div>
<div class="a" style="left:61.2px;top:1075.2px;width:3.6px;height:3.6px;border-radius:50%;background:#e95420"></div>
<div class="a" style="left:144.9px;top:1075.2px;width:3.6px;height:3.6px;border-radius:50%;background:#e95420"></div>
<div class="a" style="left:187.0px;top:1075.2px;width:3.6px;height:3.6px;border-radius:50%;background:#e95420"></div>
<div class="a" style="left:229.0px;top:1075.2px;width:3.6px;height:3.6px;border-radius:50%;background:#e95420"></div>
<div class="a" style="left:263.4px;top:1075.2px;width:3.6px;height:3.6px;border-radius:50%;background:#e95420"></div>
<div class="a" style="left:268.6px;top:1075.2px;width:3.6px;height:3.6px;border-radius:50%;background:#e95420"></div>
<div class="a" style="left:273.8px;top:1075.2px;width:3.6px;height:3.6px;border-radius:50%;background:#e95420"></div>
<div class="a" style="left:279.0px;top:1075.2px;width:3.6px;height:3.6px;border-radius:50%;background:#e95420"></div>
<div class="a" style="left:439.0px;top:1075.2px;width:3.6px;height:3.6px;border-radius:50%;background:#e95420"></div>
<div class="a" style="left:481.0px;top:1075.2px;width:3.6px;height:3.6px;border-radius:50%;background:#e95420"></div>
<div class="a" style="left:515.4px;top:1075.2px;width:3.6px;height:3.6px;border-radius:50%;background:#e95420"></div>
<div class="a" style="left:520.6px;top:1075.2px;width:3.6px;height:3.6px;border-radius:50%;background:#e95420"></div>
<div class="a" style="left:525.8px;top:1075.2px;width:3.6px;height:3.6px;border-radius:50%;background:#e95420"></div>
<div class="a" style="left:531.0px;top:1075.2px;width:3.6px;height:3.6px;border-radius:50%;background:#e95420"></div>
<div class="a" style="left:562.3px;top:1075.2px;width:3.6px;height:3.6px;border-radius:50%;background:#e95420"></div>
<div class="a" style="left:567.5px;top:1075.2px;width:3.6px;height:3.6px;border-radius:50%;background:#e95420"></div>
<div class="a" style="left:1880px;top:1041px;width:38px;height:38px;border-radius:6px;background:rgba(255,255,255,0.1)"></div>
<div class="a" style="left:1891.5px;top:1052.7px;width:3px;height:3px;border-radius:50%;background:#f4f4f4"></div>
<div class="a" style="left:1897.5px;top:1052.7px;width:3px;height:3px;border-radius:50%;background:#f4f4f4"></div>
<div class="a" style="left:1903.5px;top:1052.7px;width:3px;height:3px;border-radius:50%;background:#f4f4f4"></div>
<div class="a" style="left:1891.5px;top:1058.7px;width:3px;height:3px;border-radius:50%;background:#f4f4f4"></div>
<div class="a" style="left:1897.5px;top:1058.7px;width:3px;height:3px;border-radius:50%;background:#f4f4f4"></div>
<div class="a" style="left:1903.5px;top:1058.7px;width:3px;height:3px;border-radius:50%;background:#f4f4f4"></div>
<div class="a" style="left:1891.5px;top:1064.7px;width:3px;height:3px;border-radius:50%;background:#f4f4f4"></div>
<div class="a" style="left:1897.5px;top:1064.7px;width:3px;height:3px;border-radius:50%;background:#f4f4f4"></div>
<div class="a" style="left:1903.5px;top:1064.7px;width:3px;height:3px;border-radius:50%;background:#f4f4f4"></div>
<div class="a" style="left:1767px;top:1007px;width:148px;height:25px;border-radius:8px;background:rgba(40,45,50,0.69)"></div>
<div class="t" style="left:1779px;top:1011px;font-size:15px;line-height:17px;color:#f4f4f4">Show Applications</div>
</body></html>
